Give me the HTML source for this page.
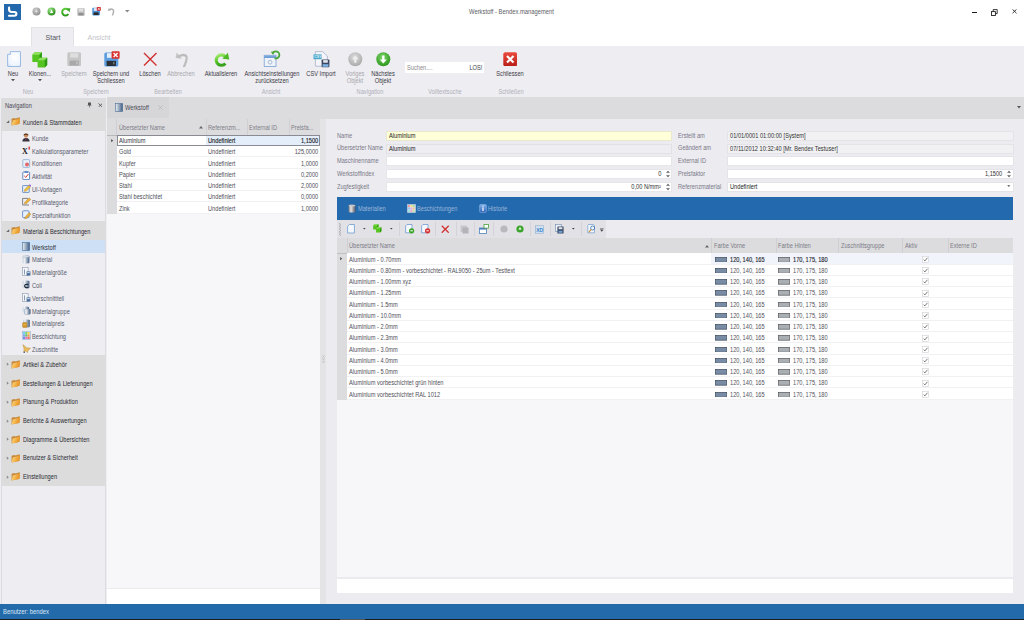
<!DOCTYPE html><html><head><meta charset="utf-8"><style>
*{margin:0;padding:0;box-sizing:border-box}
html,body{width:1024px;height:620px;overflow:hidden;background:#eeedf2}
body{position:relative;font-family:"Liberation Sans",sans-serif}
.a{position:absolute}
.t{position:absolute;white-space:nowrap;line-height:10px;font-family:"Liberation Sans",sans-serif}
</style></head><body>
<div class="a" style="left:0px;top:0px;width:1024px;height:46px;background:#ffffff"></div>
<div class="a" style="left:4px;top:4px;width:17px;height:16px;background:#2368ad"></div>
<svg class="a" style="left:4px;top:4px" width="17" height="16" viewBox="0 0 17 16"><path d="M5.1 3.6 V5.6 Q5.1 8 7.6 8 H10.2 Q12.4 8 12.4 9.8 Q12.4 11.7 10.2 11.7 H5" fill="none" stroke="#fff" stroke-width="2.1" stroke-linecap="round" stroke-linejoin="round"/></svg>
<svg class="a" style="left:31.6px;top:7.4px" width="9" height="9" viewBox="0 0 9 9"><defs><radialGradient id="gg1" cx="0.4" cy="0.35" r="0.7"><stop offset="0" stop-color="#d0d0d0"/><stop offset="1" stop-color="#8d8d8d"/></radialGradient></defs><circle cx="4.5" cy="4.4" r="4" fill="url(#gg1)"/><path d="M4.5 2.6 L4.9 4 L5.9 4.4 L4.9 4.8 L4.5 6.2 L4.1 4.8 L3.1 4.4 L4.1 4Z" fill="#e8e8e8"/></svg>
<svg class="a" style="left:46.6px;top:7.2px" width="9" height="9" viewBox="0 0 9 9"><defs><radialGradient id="gg2" cx="0.35" cy="0.3" r="0.75"><stop offset="0" stop-color="#9ce88a"/><stop offset="1" stop-color="#2a8a1a"/></radialGradient></defs><circle cx="4.5" cy="4.4" r="4" fill="url(#gg2)"/><path d="M4.6 2.6 L6.2 6 H3Z" fill="#fff"/></svg>
<svg class="a" style="left:61.2px;top:7px" width="9.5" height="9.5" viewBox="0 0 9.5 9.5"><defs><linearGradient id="rg" x1="0" y1="0" x2="0" y2="1"><stop offset="0" stop-color="#5ccc3a"/><stop offset="1" stop-color="#2a9a1a"/></linearGradient></defs><path d="M7.4 3.2 A3.4 3.4 0 1 0 7.4 7" fill="none" stroke="url(#rg)" stroke-width="2"/><path d="M5.4 1.6 L9.4 1.2 L8.6 5.2 Z" fill="#3aa52a"/></svg>
<svg class="a" style="left:77px;top:7.5px" width="8" height="8" viewBox="0 0 8 8"><rect x="0.3" y="0.3" width="7.4" height="7.4" rx="0.8" fill="#bdbdbd"/><rect x="1.8" y="0.8" width="4.4" height="2.6" fill="#e2e2e2"/><rect x="1.5" y="5" width="5" height="2.4" fill="#8e8e8e"/></svg>
<svg class="a" style="left:92px;top:7.3px" width="9" height="9" viewBox="0 0 9 9"><rect x="0.3" y="0.8" width="7.6" height="7.6" rx="0.8" fill="#4a8fd6"/><rect x="1.8" y="1.2" width="3.6" height="2.6" fill="#e8eef5"/><rect x="1.6" y="5.4" width="5" height="2.6" fill="#2a2a2a"/><rect x="4.8" y="0" width="4" height="3.8" rx="0.6" fill="#d42b2b"/><path d="M5.8 1 L7.8 2.8 M7.8 1 L5.8 2.8" stroke="#fff" stroke-width="0.7"/></svg>
<svg class="a" style="left:107px;top:7px" width="8" height="9" viewBox="0 0 8 9"><path d="M1.8 1 L1 4 L3.8 3.6" fill="#b0b0b0"/><path d="M2 3 Q4 1.2 6 2.6 Q7.4 4 5.4 8.5" fill="none" stroke="#b0b0b0" stroke-width="1.5"/></svg>
<svg class="a" style="left:125px;top:10px" width="4.5" height="3" viewBox="0 0 4.5 3"><path d="M0 0 H4.5 L2.25 2.6Z" fill="#888"/></svg>
<div class="t" style="left:468.70px;top:7.12px;font-size:6.3px;color:#606066;font-weight:normal;-webkit-text-stroke:0.02px #606066;;transform:scaleX(0.925);transform-origin:0 0">Werkstoff - Bendex.management</div>
<div class="a" style="left:972px;top:11.6px;width:5.2px;height:1.9px;background:#1a1a1a"></div>
<svg class="a" style="left:990.5px;top:8.5px" width="7" height="7" viewBox="0 0 7 7"><rect x="0.5" y="2.6" width="3.9" height="3.9" fill="none" stroke="#222" stroke-width="0.9"/><path d="M2.2 2.6 V0.6 H6.2 V4.6 H4.4" fill="none" stroke="#222" stroke-width="0.9"/></svg>
<svg class="a" style="left:1011.5px;top:9.2px" width="5" height="4.6" viewBox="0 0 5 4.6"><path d="M0.5 0.4 L4.5 4.2 M4.5 0.4 L0.5 4.2" stroke="#222" stroke-width="0.9"/></svg>
<div class="a" style="left:31px;top:26.8px;width:43px;height:19.4px;background:#eeedf2;border:1px solid #e2e2e6;border-bottom:none"></div>
<div class="a" style="left:0px;top:45.6px;width:31px;height:0.8px;background:#e2e2e6"></div>
<div class="a" style="left:74px;top:45.6px;width:950px;height:0.8px;background:#e2e2e6"></div>
<div class="t" style="left:-47.50px;width:200px;text-align:center;top:32.54px;font-size:7.4px;color:#555560;font-weight:normal;-webkit-text-stroke:0.02px #555560;;transform:scaleX(0.95);transform-origin:50% 0">Start</div>
<div class="t" style="left:-1.50px;width:200px;text-align:center;top:32.54px;font-size:7.4px;color:#c4c4c8;font-weight:normal;-webkit-text-stroke:0.02px #c4c4c8;;transform:scaleX(0.95);transform-origin:50% 0">Ansicht</div>
<div class="a" style="left:0px;top:46px;width:1024px;height:50px;background:#eeedf2"></div>
<svg class="a" style="left:7px;top:51px" width="14" height="16" viewBox="0 0 14 16"><defs><linearGradient id="dg" x1="0" y1="0" x2="1" y2="1"><stop offset="0" stop-color="#ffffff"/><stop offset="1" stop-color="#d6e6f8"/></linearGradient></defs><defs><radialGradient id="dg2" cx="0.55" cy="0.4" r="0.75"><stop offset="0" stop-color="#ffffff"/><stop offset="0.7" stop-color="#eef5fd"/><stop offset="1" stop-color="#cfe0f6"/></radialGradient></defs><path d="M3.3 0.6 H13.1 Q13.5 0.6 13.5 1 V15 Q13.5 15.5 13 15.5 H1 Q0.6 15.5 0.6 15 V3.4 H3.3 Z" fill="url(#dg2)" stroke="#9dbbe2" stroke-width="1"/></svg>
<div class="t" style="left:-86.70px;width:200px;text-align:center;top:69.02px;font-size:6.3px;color:#3c3c46;font-weight:normal;-webkit-text-stroke:0.02px #3c3c46;;transform:scaleX(0.9);transform-origin:50% 0">Neu</div>
<svg class="a" style="left:11.3px;top:79px" width="4" height="2.5" viewBox="0 0 4 2.5"><path d="M0 0 H4 L2 2.2Z" fill="#555"/></svg>
<svg class="a" style="left:32px;top:51.5px" width="16" height="16" viewBox="0 0 16 16"><g transform="translate(0.3,0.3)"><path d="M0 2.4 L2.4 0 H9.6 V7.2 L7.2 9.6 H0Z" fill="#56c420"/><path d="M0 2.4 L2.4 0 H9.6 L7.2 2.4Z" fill="#8fe060"/><path d="M7.2 2.4 L9.6 0 V7.2 L7.2 9.6Z" fill="#2c9a14"/></g><g transform="translate(5.6,5.8)"><path d="M0 2.4 L2.4 0 H9.6 V7.2 L7.2 9.6 H0Z" fill="#56c420"/><path d="M0 2.4 L2.4 0 H9.6 L7.2 2.4Z" fill="#8fe060"/><path d="M7.2 2.4 L9.6 0 V7.2 L7.2 9.6Z" fill="#2c9a14"/></g></svg>
<div class="t" style="left:-59.80px;width:200px;text-align:center;top:69.02px;font-size:6.3px;color:#3c3c46;font-weight:normal;-webkit-text-stroke:0.02px #3c3c46;;transform:scaleX(0.9);transform-origin:50% 0">Klonen...</div>
<svg class="a" style="left:37.8px;top:79px" width="4" height="2.5" viewBox="0 0 4 2.5"><path d="M0 0 H4 L2 2.2Z" fill="#555"/></svg>
<svg class="a" style="left:66.5px;top:51.8px" width="14.5" height="14.5" viewBox="0 0 14.5 14.5"><rect x="0.3" y="0.3" width="13.8" height="13.8" rx="1.5" fill="#c6c6c6"/><rect x="3.2" y="1.2" width="8" height="4.4" fill="#dedede"/><rect x="2.6" y="8.6" width="9.2" height="5" fill="#a9a9a9"/><rect x="9.4" y="9.6" width="1" height="2.6" fill="#d0d0d0"/></svg>
<div class="t" style="left:-26.50px;width:200px;text-align:center;top:69.02px;font-size:6.3px;color:#a8a8ae;font-weight:normal;-webkit-text-stroke:0.02px #a8a8ae;;transform:scaleX(0.9);transform-origin:50% 0">Speichern</div>
<svg class="a" style="left:103.8px;top:51.2px" width="16" height="16" viewBox="0 0 16 16"><rect x="0.3" y="1.4" width="14" height="14" rx="1.5" fill="#5c9ee0"/><rect x="3" y="2.2" width="7" height="4.6" fill="#e6edf4"/><rect x="2.6" y="9.8" width="9.4" height="5.2" fill="#2b2f36"/><rect x="9.4" y="10.8" width="0.9" height="2.6" fill="#8aa"/><rect x="7.6" y="0.2" width="8" height="7.6" rx="1" fill="#d9322f"/><path d="M9.6 2 L13.6 6 M13.6 2 L9.6 6" stroke="#fff" stroke-width="1.3"/></svg>
<div class="t" style="left:11.30px;width:200px;text-align:center;top:69.02px;font-size:6.3px;color:#3c3c46;font-weight:normal;-webkit-text-stroke:0.02px #3c3c46;;transform:scaleX(0.9);transform-origin:50% 0">Speichern und</div>
<div class="t" style="left:11.00px;width:200px;text-align:center;top:75.82px;font-size:6.3px;color:#3c3c46;font-weight:normal;-webkit-text-stroke:0.02px #3c3c46;;transform:scaleX(0.9);transform-origin:50% 0">Schliessen</div>
<svg class="a" style="left:143px;top:52px" width="14.5" height="14.5" viewBox="0 0 14.5 14.5"><path d="M1 1 L13.5 13.5 M13.5 1 L1 13.5" stroke="#d22f2f" stroke-width="1.4"/></svg>
<div class="t" style="left:49.50px;width:200px;text-align:center;top:69.02px;font-size:6.3px;color:#3c3c46;font-weight:normal;-webkit-text-stroke:0.02px #3c3c46;;transform:scaleX(0.9);transform-origin:50% 0">Löschen</div>
<svg class="a" style="left:174.5px;top:51.5px" width="13.5" height="15.5" viewBox="0 0 13.5 15.5"><path d="M1.7 0.4 L0.6 6.1 L6.9 6.8 Z" fill="#c4c4c4"/><path d="M3.6 4.4 Q8 2 11 3.8 Q13 5.6 9 14.8" fill="none" stroke="#bcbcbc" stroke-width="2.3" stroke-linecap="round"/></svg>
<div class="t" style="left:81.00px;width:200px;text-align:center;top:69.02px;font-size:6.3px;color:#a8a8ae;font-weight:normal;-webkit-text-stroke:0.02px #a8a8ae;;transform:scaleX(0.9);transform-origin:50% 0">Abbrechen</div>
<svg class="a" style="left:213.5px;top:51.8px" width="16" height="15" viewBox="0 0 16 15"><defs><linearGradient id="ag" x1="0" y1="0" x2="0.3" y2="1"><stop offset="0" stop-color="#a4ec70"/><stop offset="0.5" stop-color="#62cc30"/><stop offset="1" stop-color="#38a41c"/></linearGradient></defs><path d="M11.1 4.4 A5.2 5.2 0 1 0 11.4 11.5" fill="none" stroke="url(#ag)" stroke-width="3.1"/><path d="M13.9 0.8 L15.3 7.6 L8.4 6.8 Z" fill="#4cba24"/></svg>
<div class="t" style="left:121.30px;width:200px;text-align:center;top:69.02px;font-size:6.3px;color:#3c3c46;font-weight:normal;-webkit-text-stroke:0.02px #3c3c46;;transform:scaleX(0.9);transform-origin:50% 0">Aktualisieren</div>
<svg class="a" style="left:263px;top:50px" width="18" height="18" viewBox="0 0 18 18"><defs><linearGradient id="wt" x1="0" y1="0" x2="0" y2="1"><stop offset="0" stop-color="#8db4e2"/><stop offset="1" stop-color="#5b8fd0"/></linearGradient></defs><rect x="1.2" y="5.3" width="11.8" height="11.2" fill="#eef3fa" stroke="#7aa0d4" stroke-width="0.8"/><rect x="1.2" y="5.3" width="11.8" height="2.6" fill="url(#wt)"/><circle cx="7.1" cy="12.2" r="1.9" fill="none" stroke="#a8bcd6" stroke-width="1"/><path d="M9.6 3.6 A3.5 3.5 0 1 1 11.6 8.2" fill="none" stroke="#49a83a" stroke-width="1.9"/><path d="M7.8 1.8 L11.4 1.6 L10.2 5Z" fill="#49a83a"/></svg>
<div class="t" style="left:171.80px;width:200px;text-align:center;top:68.82px;font-size:6.3px;color:#3c3c46;font-weight:normal;-webkit-text-stroke:0.02px #3c3c46;;transform:scaleX(0.9);transform-origin:50% 0">Ansichtseinstellungen</div>
<div class="t" style="left:172.30px;width:200px;text-align:center;top:75.82px;font-size:6.3px;color:#3c3c46;font-weight:normal;-webkit-text-stroke:0.02px #3c3c46;;transform:scaleX(0.9);transform-origin:50% 0">zurücksetzen</div>
<svg class="a" style="left:312.5px;top:50.5px" width="17" height="17" viewBox="0 0 17 17"><path d="M2.4 0.6 H9.6 L14.4 5 V15.2 H2.4Z" fill="#f3f5fa" stroke="#a0a8c0" stroke-width="0.7"/><rect x="0.5" y="3.4" width="8.2" height="4.8" fill="#4aa6c9"/><text x="1.2" y="7.4" font-family="Liberation Sans" font-size="3.6" font-weight="bold" fill="#dff2fa">CSV</text><rect x="8.6" y="8.5" width="7.8" height="7.8" rx="0.8" fill="#3b4660"/><rect x="10.2" y="9.1" width="4.6" height="2.6" fill="#e4e8ee"/><rect x="9.6" y="13.2" width="5.8" height="2.6" fill="#7fb2e2"/></svg>
<div class="t" style="left:220.70px;width:200px;text-align:center;top:68.82px;font-size:6.3px;color:#3c3c46;font-weight:normal;-webkit-text-stroke:0.02px #3c3c46;;transform:scaleX(0.9);transform-origin:50% 0">CSV Import</div>
<svg class="a" style="left:347.5px;top:51.8px" width="15" height="15" viewBox="0 0 15 15"><defs><radialGradient id="vg" cx="0.45" cy="0.35" r="0.7"><stop offset="0" stop-color="#dcdcdc"/><stop offset="1" stop-color="#a6a6a6"/></radialGradient></defs><circle cx="7.3" cy="7.3" r="7" fill="url(#vg)"/><path d="M7.3 3.4 L10.6 7.2 H8.4 V10.8 H6.2 V7.2 H4Z" fill="#eeeeee"/></svg>
<div class="t" style="left:254.60px;width:200px;text-align:center;top:68.82px;font-size:6.3px;color:#a8a8ae;font-weight:normal;-webkit-text-stroke:0.02px #a8a8ae;;transform:scaleX(0.9);transform-origin:50% 0">Voriges</div>
<div class="t" style="left:254.60px;width:200px;text-align:center;top:75.72px;font-size:6.3px;color:#a8a8ae;font-weight:normal;-webkit-text-stroke:0.02px #a8a8ae;;transform:scaleX(0.9);transform-origin:50% 0">Objekt</div>
<svg class="a" style="left:375.8px;top:51.8px" width="15" height="15" viewBox="0 0 15 15"><defs><radialGradient id="ng" cx="0.45" cy="0.35" r="0.7"><stop offset="0" stop-color="#7fd96a"/><stop offset="1" stop-color="#259016"/></radialGradient></defs><circle cx="7.3" cy="7.3" r="7" fill="url(#ng)"/><path d="M7.3 11.4 L10.8 7.4 H8.5 V3.6 H6.1 V7.4 H3.8Z" fill="#ffffff"/></svg>
<div class="t" style="left:282.50px;width:200px;text-align:center;top:68.82px;font-size:6.3px;color:#3c3c46;font-weight:normal;-webkit-text-stroke:0.02px #3c3c46;;transform:scaleX(0.9);transform-origin:50% 0">Nächstes</div>
<div class="t" style="left:282.80px;width:200px;text-align:center;top:75.72px;font-size:6.3px;color:#3c3c46;font-weight:normal;-webkit-text-stroke:0.02px #3c3c46;;transform:scaleX(0.9);transform-origin:50% 0">Objekt</div>
<div class="a" style="left:405px;top:62px;width:79px;height:10.7px;background:#fff"></div>
<div class="t" style="left:407.20px;top:63.02px;font-size:6.3px;color:#8a8a8a;font-weight:normal;-webkit-text-stroke:0.02px #8a8a8a;;transform:scaleX(0.9);transform-origin:0 0">Suchen....</div>
<div class="t" style="right:541.40px;top:63.02px;font-size:6.3px;color:#3c3c46;font-weight:normal;-webkit-text-stroke:0.02px #3c3c46;;transform:scaleX(0.9);transform-origin:100% 0">LOS!</div>
<svg class="a" style="left:502.5px;top:51.8px" width="14.5" height="14.5" viewBox="0 0 14.5 14.5"><defs><linearGradient id="sg" x1="0" y1="0" x2="0" y2="1"><stop offset="0" stop-color="#ec4b3e"/><stop offset="1" stop-color="#b81e18"/></linearGradient></defs><rect x="0.3" y="0.3" width="13.9" height="13.9" rx="2" fill="url(#sg)"/><path d="M4 4 L10.5 10.5 M10.5 4 L4 10.5" stroke="#fff" stroke-width="2.2"/></svg>
<div class="t" style="left:410.00px;width:200px;text-align:center;top:68.62px;font-size:6.3px;color:#3c3c46;font-weight:normal;-webkit-text-stroke:0.02px #3c3c46;;transform:scaleX(0.9);transform-origin:50% 0">Schliessen</div>
<div class="t" style="left:-71.70px;width:200px;text-align:center;top:87.42px;font-size:6.3px;color:#b0b0b8;font-weight:normal;-webkit-text-stroke:0.02px #b0b0b8;;transform:scaleX(0.9);transform-origin:50% 0">Neu</div>
<div class="t" style="left:-4.50px;width:200px;text-align:center;top:87.42px;font-size:6.3px;color:#b0b0b8;font-weight:normal;-webkit-text-stroke:0.02px #b0b0b8;;transform:scaleX(0.9);transform-origin:50% 0">Speichern</div>
<div class="t" style="left:67.50px;width:200px;text-align:center;top:87.42px;font-size:6.3px;color:#b0b0b8;font-weight:normal;-webkit-text-stroke:0.02px #b0b0b8;;transform:scaleX(0.9);transform-origin:50% 0">Bearbeiten</div>
<div class="t" style="left:170.60px;width:200px;text-align:center;top:87.42px;font-size:6.3px;color:#b0b0b8;font-weight:normal;-webkit-text-stroke:0.02px #b0b0b8;;transform:scaleX(0.9);transform-origin:50% 0">Ansicht</div>
<div class="t" style="left:270.30px;width:200px;text-align:center;top:87.42px;font-size:6.3px;color:#b0b0b8;font-weight:normal;-webkit-text-stroke:0.02px #b0b0b8;;transform:scaleX(0.9);transform-origin:50% 0">Navigation</div>
<div class="t" style="left:345.30px;width:200px;text-align:center;top:87.42px;font-size:6.3px;color:#b0b0b8;font-weight:normal;-webkit-text-stroke:0.02px #b0b0b8;;transform:scaleX(0.9);transform-origin:50% 0">Volltextsuche</div>
<div class="t" style="left:410.50px;width:200px;text-align:center;top:87.42px;font-size:6.3px;color:#b0b0b8;font-weight:normal;-webkit-text-stroke:0.02px #b0b0b8;;transform:scaleX(0.9);transform-origin:50% 0">Schließen</div>
<div class="a" style="left:1px;top:98px;width:104.5px;height:506px;background:#eeedf2;border-left:1px solid #dcdce0;border-right:1px solid #dcdce0"></div>
<div class="a" style="left:1px;top:98px;width:104.5px;height:14.3px;background:#dcdcdf"></div>
<div class="t" style="left:5.00px;top:100.92px;font-size:6.3px;color:#4a4a55;font-weight:normal;-webkit-text-stroke:0.02px #4a4a55;;transform:scaleX(0.9);transform-origin:0 0">Navigation</div>
<svg class="a" style="left:86.5px;top:102px" width="5" height="6" viewBox="0 0 5 6"><path d="M1 0.5 H4 V3 H4.6 V3.6 H2.8 V5.6 H2.2 V3.6 H0.4 V3 H1Z" fill="#555"/></svg>
<svg class="a" style="left:97.6px;top:102.7px" width="4.8" height="4.6" viewBox="0 0 4.8 4.6"><path d="M0.4 0.4 L4.4 4.2 M4.4 0.4 L0.4 4.2" stroke="#5a5a5e" stroke-width="0.9"/></svg>
<div class="a" style="left:1.5px;top:112.3px;width:103.5px;height:18.9px;background:#dcdcdd"></div>
<svg class="a" style="left:5.6px;top:120.3px" width="4" height="4" viewBox="0 0 4 4"><path d="M3.2 0.2 V3 H0.2Z" fill="#666"/></svg>
<svg class="a" style="left:11.3px;top:117.4px" width="9.5" height="9" viewBox="0 0 9.5 9"><defs><linearGradient id="fg" x1="0" y1="0" x2="1" y2="0.3"><stop offset="0" stop-color="#ffe08a"/><stop offset="1" stop-color="#e8901c"/></linearGradient></defs><path d="M0.5 1.8 L3.4 0.9 L4.2 1.5 L8.8 0.3 L8.4 6.8 L0.6 8.4Z" fill="#c8893a"/><path d="M1.8 3.4 L9.1 1.5 L8.2 6.9 L0.7 8.4 Z" fill="url(#fg)"/></svg>
<div class="t" style="left:22.60px;top:118.02px;font-size:6.3px;color:#2a2a32;font-weight:normal;-webkit-text-stroke:0.02px #2a2a32;;transform:scaleX(0.9);transform-origin:0 0">Kunden &amp; Stammdaten</div>
<div class="a" style="left:1.5px;top:221.10000000000002px;width:103.5px;height:18.9px;background:#dcdcdd"></div>
<svg class="a" style="left:5.6px;top:229.10000000000002px" width="4" height="4" viewBox="0 0 4 4"><path d="M3.2 0.2 V3 H0.2Z" fill="#666"/></svg>
<svg class="a" style="left:11.3px;top:226.20000000000002px" width="9.5" height="9" viewBox="0 0 9.5 9"><defs><linearGradient id="fg" x1="0" y1="0" x2="1" y2="0.3"><stop offset="0" stop-color="#ffe08a"/><stop offset="1" stop-color="#e8901c"/></linearGradient></defs><path d="M0.5 1.8 L3.4 0.9 L4.2 1.5 L8.8 0.3 L8.4 6.8 L0.6 8.4Z" fill="#c8893a"/><path d="M1.8 3.4 L9.1 1.5 L8.2 6.9 L0.7 8.4 Z" fill="url(#fg)"/></svg>
<div class="t" style="left:22.60px;top:226.82px;font-size:6.3px;color:#2a2a32;font-weight:normal;-webkit-text-stroke:0.02px #2a2a32;;transform:scaleX(0.9);transform-origin:0 0">Material &amp; Beschichtungen</div>
<div class="a" style="left:1.5px;top:239.8px;width:103.5px;height:12.8px;background:#cde0f5"></div>
<div class="a" style="left:1.5px;top:355.0px;width:103.5px;height:18.9px;background:#dcdcdd"></div>
<svg class="a" style="left:5.8px;top:362.4px" width="4" height="5" viewBox="0 0 4 5"><path d="M0.8 0.6 L2.8 2.2 L0.8 3.8Z" fill="#888"/></svg>
<svg class="a" style="left:11.3px;top:360.09999999999997px" width="9.5" height="9" viewBox="0 0 9.5 9"><defs><linearGradient id="fg" x1="0" y1="0" x2="1" y2="0.3"><stop offset="0" stop-color="#ffe08a"/><stop offset="1" stop-color="#e8901c"/></linearGradient></defs><path d="M0.5 1.8 L3.4 0.9 L4.2 1.5 L8.8 0.3 L8.4 6.8 L0.6 8.4Z" fill="#c8893a"/><path d="M1.8 3.4 L9.1 1.5 L8.2 6.9 L0.7 8.4 Z" fill="url(#fg)"/></svg>
<div class="t" style="left:22.60px;top:359.92px;font-size:6.3px;color:#2a2a32;font-weight:normal;-webkit-text-stroke:0.02px #2a2a32;;transform:scaleX(0.9);transform-origin:0 0">Artikel &amp; Zubehör</div>
<div class="a" style="left:1.5px;top:373.7px;width:103.5px;height:18.9px;background:#dcdcdd"></div>
<svg class="a" style="left:5.8px;top:381.09999999999997px" width="4" height="5" viewBox="0 0 4 5"><path d="M0.8 0.6 L2.8 2.2 L0.8 3.8Z" fill="#888"/></svg>
<svg class="a" style="left:11.3px;top:378.79999999999995px" width="9.5" height="9" viewBox="0 0 9.5 9"><defs><linearGradient id="fg" x1="0" y1="0" x2="1" y2="0.3"><stop offset="0" stop-color="#ffe08a"/><stop offset="1" stop-color="#e8901c"/></linearGradient></defs><path d="M0.5 1.8 L3.4 0.9 L4.2 1.5 L8.8 0.3 L8.4 6.8 L0.6 8.4Z" fill="#c8893a"/><path d="M1.8 3.4 L9.1 1.5 L8.2 6.9 L0.7 8.4 Z" fill="url(#fg)"/></svg>
<div class="t" style="left:22.60px;top:378.62px;font-size:6.3px;color:#2a2a32;font-weight:normal;-webkit-text-stroke:0.02px #2a2a32;;transform:scaleX(0.9);transform-origin:0 0">Bestellungen &amp; Lieferungen</div>
<div class="a" style="left:1.5px;top:392.4px;width:103.5px;height:18.9px;background:#dcdcdd"></div>
<svg class="a" style="left:5.8px;top:399.79999999999995px" width="4" height="5" viewBox="0 0 4 5"><path d="M0.8 0.6 L2.8 2.2 L0.8 3.8Z" fill="#888"/></svg>
<svg class="a" style="left:11.3px;top:397.49999999999994px" width="9.5" height="9" viewBox="0 0 9.5 9"><defs><linearGradient id="fg" x1="0" y1="0" x2="1" y2="0.3"><stop offset="0" stop-color="#ffe08a"/><stop offset="1" stop-color="#e8901c"/></linearGradient></defs><path d="M0.5 1.8 L3.4 0.9 L4.2 1.5 L8.8 0.3 L8.4 6.8 L0.6 8.4Z" fill="#c8893a"/><path d="M1.8 3.4 L9.1 1.5 L8.2 6.9 L0.7 8.4 Z" fill="url(#fg)"/></svg>
<div class="t" style="left:22.60px;top:397.32px;font-size:6.3px;color:#2a2a32;font-weight:normal;-webkit-text-stroke:0.02px #2a2a32;;transform:scaleX(0.9);transform-origin:0 0">Planung &amp; Produktion</div>
<div class="a" style="left:1.5px;top:411.09999999999997px;width:103.5px;height:18.9px;background:#dcdcdd"></div>
<svg class="a" style="left:5.8px;top:418.49999999999994px" width="4" height="5" viewBox="0 0 4 5"><path d="M0.8 0.6 L2.8 2.2 L0.8 3.8Z" fill="#888"/></svg>
<svg class="a" style="left:11.3px;top:416.19999999999993px" width="9.5" height="9" viewBox="0 0 9.5 9"><defs><linearGradient id="fg" x1="0" y1="0" x2="1" y2="0.3"><stop offset="0" stop-color="#ffe08a"/><stop offset="1" stop-color="#e8901c"/></linearGradient></defs><path d="M0.5 1.8 L3.4 0.9 L4.2 1.5 L8.8 0.3 L8.4 6.8 L0.6 8.4Z" fill="#c8893a"/><path d="M1.8 3.4 L9.1 1.5 L8.2 6.9 L0.7 8.4 Z" fill="url(#fg)"/></svg>
<div class="t" style="left:22.60px;top:416.02px;font-size:6.3px;color:#2a2a32;font-weight:normal;-webkit-text-stroke:0.02px #2a2a32;;transform:scaleX(0.9);transform-origin:0 0">Berichte &amp; Auswertungen</div>
<div class="a" style="left:1.5px;top:429.79999999999995px;width:103.5px;height:18.9px;background:#dcdcdd"></div>
<svg class="a" style="left:5.8px;top:437.19999999999993px" width="4" height="5" viewBox="0 0 4 5"><path d="M0.8 0.6 L2.8 2.2 L0.8 3.8Z" fill="#888"/></svg>
<svg class="a" style="left:11.3px;top:434.8999999999999px" width="9.5" height="9" viewBox="0 0 9.5 9"><defs><linearGradient id="fg" x1="0" y1="0" x2="1" y2="0.3"><stop offset="0" stop-color="#ffe08a"/><stop offset="1" stop-color="#e8901c"/></linearGradient></defs><path d="M0.5 1.8 L3.4 0.9 L4.2 1.5 L8.8 0.3 L8.4 6.8 L0.6 8.4Z" fill="#c8893a"/><path d="M1.8 3.4 L9.1 1.5 L8.2 6.9 L0.7 8.4 Z" fill="url(#fg)"/></svg>
<div class="t" style="left:22.60px;top:434.72px;font-size:6.3px;color:#2a2a32;font-weight:normal;-webkit-text-stroke:0.02px #2a2a32;;transform:scaleX(0.9);transform-origin:0 0">Diagramme &amp; Übersichten</div>
<div class="a" style="left:1.5px;top:448.49999999999994px;width:103.5px;height:18.9px;background:#dcdcdd"></div>
<svg class="a" style="left:5.8px;top:455.8999999999999px" width="4" height="5" viewBox="0 0 4 5"><path d="M0.8 0.6 L2.8 2.2 L0.8 3.8Z" fill="#888"/></svg>
<svg class="a" style="left:11.3px;top:453.5999999999999px" width="9.5" height="9" viewBox="0 0 9.5 9"><defs><linearGradient id="fg" x1="0" y1="0" x2="1" y2="0.3"><stop offset="0" stop-color="#ffe08a"/><stop offset="1" stop-color="#e8901c"/></linearGradient></defs><path d="M0.5 1.8 L3.4 0.9 L4.2 1.5 L8.8 0.3 L8.4 6.8 L0.6 8.4Z" fill="#c8893a"/><path d="M1.8 3.4 L9.1 1.5 L8.2 6.9 L0.7 8.4 Z" fill="url(#fg)"/></svg>
<div class="t" style="left:22.60px;top:453.42px;font-size:6.3px;color:#2a2a32;font-weight:normal;-webkit-text-stroke:0.02px #2a2a32;;transform:scaleX(0.9);transform-origin:0 0">Benutzer &amp; Sicherheit</div>
<div class="a" style="left:1.5px;top:467.19999999999993px;width:103.5px;height:18.9px;background:#dcdcdd"></div>
<svg class="a" style="left:5.8px;top:474.5999999999999px" width="4" height="5" viewBox="0 0 4 5"><path d="M0.8 0.6 L2.8 2.2 L0.8 3.8Z" fill="#888"/></svg>
<svg class="a" style="left:11.3px;top:472.2999999999999px" width="9.5" height="9" viewBox="0 0 9.5 9"><defs><linearGradient id="fg" x1="0" y1="0" x2="1" y2="0.3"><stop offset="0" stop-color="#ffe08a"/><stop offset="1" stop-color="#e8901c"/></linearGradient></defs><path d="M0.5 1.8 L3.4 0.9 L4.2 1.5 L8.8 0.3 L8.4 6.8 L0.6 8.4Z" fill="#c8893a"/><path d="M1.8 3.4 L9.1 1.5 L8.2 6.9 L0.7 8.4 Z" fill="url(#fg)"/></svg>
<div class="t" style="left:22.60px;top:472.12px;font-size:6.3px;color:#2a2a32;font-weight:normal;-webkit-text-stroke:0.02px #2a2a32;;transform:scaleX(0.9);transform-origin:0 0">Einstellungen</div>
<svg class="a" style="left:22px;top:133.0px" width="8" height="9" viewBox="0 0 8 9"><circle cx="4" cy="2.6" r="2.1" fill="#c98c5a"/><path d="M1.6 1.6 Q4 -0.6 6.4 1.6 L6.2 2.4 Q4 1.2 1.8 2.4Z" fill="#5a3520"/><path d="M0.4 8.6 Q0.4 5 4 5 Q7.6 5 7.6 8.6Z" fill="#2e3440"/><path d="M3.6 5.2 H4.4 L4.2 8 H3.8Z" fill="#c03030"/></svg>
<div class="t" style="left:32.20px;top:133.72px;font-size:6.3px;color:#585c6e;font-weight:normal;-webkit-text-stroke:0.02px #585c6e;;transform:scaleX(0.9);transform-origin:0 0">Kunde</div>
<svg class="a" style="left:22px;top:145.8px" width="9" height="9" viewBox="0 0 9 9"><text x="0" y="7.6" font-family="Liberation Serif" font-weight="bold" font-size="8" fill="#222">X</text><rect x="6.6" y="0.6" width="1.2" height="3" fill="#d02020"/></svg>
<div class="t" style="left:32.20px;top:146.52px;font-size:6.3px;color:#585c6e;font-weight:normal;-webkit-text-stroke:0.02px #585c6e;;transform:scaleX(0.9);transform-origin:0 0">Kalkulationsparameter</div>
<svg class="a" style="left:22px;top:158.6px" width="9" height="9" viewBox="0 0 9 9"><rect x="0.8" y="0.6" width="6.8" height="7.8" rx="0.8" fill="#e8f0f8" stroke="#7da2cc" stroke-width="0.7"/><circle cx="5" cy="5.6" r="2" fill="#e06868"/></svg>
<div class="t" style="left:32.20px;top:159.32px;font-size:6.3px;color:#585c6e;font-weight:normal;-webkit-text-stroke:0.02px #585c6e;;transform:scaleX(0.9);transform-origin:0 0">Konditionen</div>
<svg class="a" style="left:22px;top:171.4px" width="9" height="9" viewBox="0 0 9 9"><rect x="0.8" y="1" width="6.8" height="7.6" rx="0.6" fill="#fff" stroke="#4d7fc0" stroke-width="0.9"/><rect x="2.6" y="0.2" width="3.2" height="1.6" fill="#4d7fc0"/><path d="M2.2 4.8 L3.8 6.4 L6.4 3" fill="none" stroke="#d02a2a" stroke-width="0.9"/></svg>
<div class="t" style="left:32.20px;top:172.12px;font-size:6.3px;color:#585c6e;font-weight:normal;-webkit-text-stroke:0.02px #585c6e;;transform:scaleX(0.9);transform-origin:0 0">Aktivität</div>
<svg class="a" style="left:22px;top:184.20000000000002px" width="9" height="9" viewBox="0 0 9 9"><rect x="0.6" y="1.6" width="6.6" height="7" rx="0.6" fill="#e8f0fb" stroke="#4d7fc0" stroke-width="0.8"/><path d="M2.2 7.4 L2.6 5.6 L6.8 1.2 L8.6 2.8 L4.2 7.2Z" fill="#f0c040" stroke="#8a6a20" stroke-width="0.3"/><path d="M6.8 1.2 L8 0.2 L9 1.6 L8.6 2.8Z" fill="#8a5ad0"/></svg>
<div class="t" style="left:32.20px;top:184.92px;font-size:6.3px;color:#585c6e;font-weight:normal;-webkit-text-stroke:0.02px #585c6e;;transform:scaleX(0.9);transform-origin:0 0">UI-Vorlagen</div>
<svg class="a" style="left:22px;top:197.0px" width="9" height="9" viewBox="0 0 9 9"><path d="M0.6 1.4 H6 M0.6 1.4 V8 H7" fill="none" stroke="#666" stroke-width="0.8"/><path d="M2.4 7 L2.8 5.2 L7 0.8 L8.8 2.4 L4.4 6.8Z" fill="#eab040" stroke="#8a6a20" stroke-width="0.3"/></svg>
<div class="t" style="left:32.20px;top:197.72px;font-size:6.3px;color:#585c6e;font-weight:normal;-webkit-text-stroke:0.02px #585c6e;;transform:scaleX(0.9);transform-origin:0 0">Profilkategorie</div>
<svg class="a" style="left:22px;top:209.8px" width="9" height="9" viewBox="0 0 9 9"><rect x="0.6" y="0.8" width="6.4" height="6.8" rx="0.8" fill="#e8f0fb" stroke="#4d7fc0" stroke-width="0.8"/><path d="M2.6 8.8 L3 7 L7.2 2.6 L9 4.2 L4.6 8.6Z" fill="#eab040" stroke="#8a6a20" stroke-width="0.3"/></svg>
<div class="t" style="left:32.20px;top:210.52px;font-size:6.3px;color:#585c6e;font-weight:normal;-webkit-text-stroke:0.02px #585c6e;;transform:scaleX(0.9);transform-origin:0 0">Spezialfunktion</div>
<svg class="a" style="left:22px;top:241.8px" width="8" height="9" viewBox="0 0 8 9"><defs><linearGradient id="wg" x1="0" y1="0" x2="1" y2="0"><stop offset="0" stop-color="#f0f4f8"/><stop offset="1" stop-color="#3e5f86"/></linearGradient></defs><rect x="0.4" y="0.5" width="7.2" height="8" fill="url(#wg)" stroke="#4a6b90" stroke-width="0.6"/></svg>
<div class="t" style="left:32.20px;top:242.52px;font-size:6.3px;color:#33333d;font-weight:normal;-webkit-text-stroke:0.02px #33333d;;transform:scaleX(0.9);transform-origin:0 0">Werkstoff</div>
<svg class="a" style="left:22px;top:254.6px" width="8" height="9" viewBox="0 0 8 9"><defs><linearGradient id="mg" x1="0" y1="0" x2="1" y2="0"><stop offset="0" stop-color="#c6d0dc"/><stop offset="0.3" stop-color="#eef2f6"/><stop offset="1" stop-color="#3e5a7e"/></linearGradient></defs><path d="M0.6 1.6 Q0.6 0.6 4 0.6 Q7.4 0.6 7.4 1.6 V7.4 Q7.4 8.4 4 8.4 Q0.6 8.4 0.6 7.4Z" fill="url(#mg)"/><ellipse cx="4" cy="1.6" rx="3.3" ry="0.9" fill="#dde4ec" stroke="#8aa0b8" stroke-width="0.3"/></svg>
<div class="t" style="left:32.20px;top:255.32px;font-size:6.3px;color:#585c6e;font-weight:normal;-webkit-text-stroke:0.02px #585c6e;;transform:scaleX(0.9);transform-origin:0 0">Material</div>
<svg class="a" style="left:22px;top:267.40000000000003px" width="9" height="9" viewBox="0 0 9 9"><rect x="0.5" y="0.6" width="5.6" height="7.8" fill="#f4f6f9" stroke="#8a9ab0" stroke-width="0.6"/><rect x="2" y="2.4" width="1" height="5" fill="#8a9ab0"/><rect x="4.6" y="4.4" width="3.8" height="4.2" fill="#4a6c98"/><rect x="5.2" y="5" width="2.6" height="1.2" fill="#bcd0e8"/></svg>
<div class="t" style="left:32.20px;top:268.12px;font-size:6.3px;color:#585c6e;font-weight:normal;-webkit-text-stroke:0.02px #585c6e;;transform:scaleX(0.9);transform-origin:0 0">Materialgröße</div>
<svg class="a" style="left:22px;top:280.20000000000005px" width="8" height="9" viewBox="0 0 8 9"><defs><linearGradient id="cg" x1="0" y1="0" x2="1" y2="0"><stop offset="0" stop-color="#c6d0dc"/><stop offset="0.3" stop-color="#eef2f6"/><stop offset="1" stop-color="#3e5a7e"/></linearGradient></defs><path d="M0.6 1.6 Q0.6 0.6 4 0.6 Q7.4 0.6 7.4 1.6 V7.4 Q7.4 8.4 4 8.4 Q0.6 8.4 0.6 7.4Z" fill="url(#cg)"/><path d="M6.4 4.6 Q2.6 3.6 2.6 6 Q2.6 8 6.4 7.4" fill="none" stroke="#1e2a3a" stroke-width="1.2"/></svg>
<div class="t" style="left:32.20px;top:280.92px;font-size:6.3px;color:#585c6e;font-weight:normal;-webkit-text-stroke:0.02px #585c6e;;transform:scaleX(0.9);transform-origin:0 0">Coil</div>
<svg class="a" style="left:22px;top:293.00000000000006px" width="9" height="9" viewBox="0 0 9 9"><rect x="0.5" y="0.6" width="5.6" height="7.8" fill="#f4f6f9" stroke="#8a9ab0" stroke-width="0.6"/><rect x="2" y="2.4" width="1" height="5" fill="#8a9ab0"/><rect x="4.6" y="4.4" width="3.8" height="4.2" fill="#4a6c98"/><rect x="5.2" y="5" width="2.6" height="1.2" fill="#bcd0e8"/></svg>
<div class="t" style="left:32.20px;top:293.72px;font-size:6.3px;color:#585c6e;font-weight:normal;-webkit-text-stroke:0.02px #585c6e;;transform:scaleX(0.9);transform-origin:0 0">Verschnittteil</div>
<svg class="a" style="left:22px;top:305.80000000000007px" width="9" height="9" viewBox="0 0 9 9"><defs><linearGradient id="gr" x1="0" y1="0" x2="1" y2="0"><stop offset="0" stop-color="#c6d0dc"/><stop offset="0.3" stop-color="#eef2f6"/><stop offset="1" stop-color="#3e5a7e"/></linearGradient></defs><path d="M0.6 1.4 Q0.6 0.5 3.8 0.5 Q7 0.5 7 1.4 V5.6 Q7 6.4 3.8 6.4 Q0.6 6.4 0.6 5.6Z" fill="url(#gr)"/><path d="M2.4 3.6 Q2.4 2.8 5.4 2.8 Q8.4 2.8 8.4 3.6 V7.8 Q8.4 8.6 5.4 8.6 Q2.4 8.6 2.4 7.8Z" fill="url(#gr)" stroke="#5a7090" stroke-width="0.3"/></svg>
<div class="t" style="left:32.20px;top:306.52px;font-size:6.3px;color:#585c6e;font-weight:normal;-webkit-text-stroke:0.02px #585c6e;;transform:scaleX(0.9);transform-origin:0 0">Materialgruppe</div>
<svg class="a" style="left:22px;top:318.6px" width="9" height="9" viewBox="0 0 9 9"><defs><linearGradient id="pg" x1="0" y1="0" x2="1" y2="0"><stop offset="0" stop-color="#c6d0dc"/><stop offset="0.3" stop-color="#eef2f6"/><stop offset="1" stop-color="#3e5a7e"/></linearGradient></defs><path d="M1 1.6 Q1 0.6 4.4 0.6 Q7.8 0.6 7.8 1.6 V7.4 Q7.8 8.4 4.4 8.4 Q1 8.4 1 7.4Z" fill="url(#pg)"/><rect x="0.6" y="3.6" width="4.4" height="5" rx="1" fill="#d8982a" stroke="#9a6a18" stroke-width="0.4"/><rect x="1.2" y="5.4" width="3.2" height="0.5" fill="#f6d070"/></svg>
<div class="t" style="left:32.20px;top:319.32px;font-size:6.3px;color:#585c6e;font-weight:normal;-webkit-text-stroke:0.02px #585c6e;;transform:scaleX(0.9);transform-origin:0 0">Materialpreis</div>
<svg class="a" style="left:22px;top:331.40000000000003px" width="9" height="9" viewBox="0 0 9 9"><rect x="0.4" y="0.4" width="8.2" height="8.2" fill="#dfe8f6" stroke="#9ab0d0" stroke-width="0.6"/><rect x="1.0" y="1.0" width="2.1" height="2.2" fill="#70d4f0"/><rect x="1.0" y="3.4" width="2.1" height="2.2" fill="#80a8f0"/><rect x="1.0" y="5.8" width="2.1" height="2.2" fill="#7090e0"/><rect x="3.3" y="1.0" width="2.1" height="2.2" fill="#80d070"/><rect x="3.3" y="3.4" width="2.1" height="2.2" fill="#60c060"/><rect x="3.3" y="5.8" width="2.1" height="2.2" fill="#f070c0"/><rect x="5.6" y="1.0" width="2.1" height="2.2" fill="#f0dc50"/><rect x="5.6" y="3.4" width="2.1" height="2.2" fill="#f0a050"/><rect x="5.6" y="5.8" width="2.1" height="2.2" fill="#f07060"/></svg>
<div class="t" style="left:32.20px;top:332.12px;font-size:6.3px;color:#585c6e;font-weight:normal;-webkit-text-stroke:0.02px #585c6e;;transform:scaleX(0.9);transform-origin:0 0">Beschichtung</div>
<svg class="a" style="left:22px;top:344.20000000000005px" width="9" height="9" viewBox="0 0 9 9"><path d="M0.8 0.6 L4.8 3.8 L8.6 4.2 L6 6.4 L5.6 8.6 L3.6 7 L1.8 8 L2 4.4Z" fill="#e8be60" stroke="#b08030" stroke-width="0.4"/><circle cx="2.2" cy="8.2" r="0.7" fill="#2a3a6a"/></svg>
<div class="t" style="left:32.20px;top:344.92px;font-size:6.3px;color:#585c6e;font-weight:normal;-webkit-text-stroke:0.02px #585c6e;;transform:scaleX(0.9);transform-origin:0 0">Zuschnitte</div>
<div class="a" style="left:107px;top:97px;width:917px;height:22px;background:#dcdcdf"></div>
<div class="a" style="left:107px;top:97px;width:62px;height:21px;background:#d6d6d9"></div>
<svg class="a" style="left:115px;top:103.4px" width="8" height="9" viewBox="0 0 8 9"><defs><linearGradient id="wg" x1="0" y1="0" x2="1" y2="0"><stop offset="0" stop-color="#f0f4f8"/><stop offset="1" stop-color="#3e5f86"/></linearGradient></defs><rect x="0.4" y="0.5" width="7.2" height="8" fill="url(#wg)" stroke="#4a6b90" stroke-width="0.6"/></svg>
<div class="t" style="left:125.00px;top:102.92px;font-size:6.3px;color:#4a4a55;font-weight:normal;-webkit-text-stroke:0.02px #4a4a55;;transform:scaleX(0.9);transform-origin:0 0">Werkstoff</div>
<svg class="a" style="left:157.5px;top:104.5px" width="5" height="5" viewBox="0 0 5 5"><path d="M0.5 0.5 L4.5 4.5 M4.5 0.5 L0.5 4.5" stroke="#b8b8bc" stroke-width="0.8"/></svg>
<svg class="a" style="left:1016.5px;top:106px" width="4" height="3" viewBox="0 0 4 3"><path d="M0 0 H4 L2 2.4Z" fill="#555"/></svg>
<div class="a" style="left:107px;top:119px;width:213px;height:485px;background:#f7f7f9"></div>
<div class="a" style="left:107px;top:589px;width:213px;height:15px;background:#ffffff"></div>
<div class="a" style="left:107px;top:588px;width:213px;height:1px;background:#ebebef"></div>
<div class="a" style="left:107px;top:119.4px;width:212.5px;height:15.4px;background:#dcdcde"></div>
<div class="a" style="left:107px;top:134.8px;width:10px;height:78.8px;background:#dcdcde"></div>
<div class="a" style="left:116.2px;top:119.4px;width:0.7px;height:15.4px;background:#d0d0d4"></div>
<div class="a" style="left:206.2px;top:119.4px;width:0.7px;height:15.4px;background:#d0d0d4"></div>
<div class="a" style="left:247.2px;top:119.4px;width:0.7px;height:15.4px;background:#d0d0d4"></div>
<div class="a" style="left:289px;top:119.4px;width:0.7px;height:15.4px;background:#d0d0d4"></div>
<div class="a" style="left:107px;top:134.5px;width:212.5px;height:0.7px;background:#b8b8bc"></div>
<div class="t" style="left:118.80px;top:123.02px;font-size:6.3px;color:#7c7c88;font-weight:normal;-webkit-text-stroke:0.02px #7c7c88;;transform:scaleX(0.9);transform-origin:0 0">Übersetzter Name</div>
<svg class="a" style="left:199.2px;top:126.2px" width="4" height="3" viewBox="0 0 4 3"><path d="M0 2.6 L2 0 L4 2.6Z" fill="#666"/></svg>
<div class="t" style="left:208.00px;top:123.02px;font-size:6.3px;color:#7c7c88;font-weight:normal;-webkit-text-stroke:0.02px #7c7c88;;transform:scaleX(0.9);transform-origin:0 0">Referenzm...</div>
<div class="t" style="left:249.20px;top:123.02px;font-size:6.3px;color:#7c7c88;font-weight:normal;-webkit-text-stroke:0.02px #7c7c88;;transform:scaleX(0.9);transform-origin:0 0">External ID</div>
<div class="t" style="left:291.00px;top:123.02px;font-size:6.3px;color:#7c7c88;font-weight:normal;-webkit-text-stroke:0.02px #7c7c88;;transform:scaleX(0.9);transform-origin:0 0">Preisfa...</div>
<div class="a" style="left:117px;top:134.8px;width:202.5px;height:11.25px;background:#ffffff;border-bottom:0.6px solid #f1f1f4"></div>
<div class="a" style="left:206.2px;top:134.8px;width:113.3px;height:11.25px;background:#e3eefa"></div>
<div class="a" style="left:116.6px;top:134.8px;width:203px;height:11.25px;border:1px solid #8a8a94"></div>
<div class="t" style="left:118.80px;top:136.22px;font-size:6.3px;color:#33333d;font-weight:normal;-webkit-text-stroke:0.02px #33333d;;transform:scaleX(0.9);transform-origin:0 0">Aluminium</div>
<div class="t" style="left:208.00px;top:136.22px;font-size:6.3px;color:#1a1a24;font-weight:normal;-webkit-text-stroke:0.12px #1a1a24;;transform:scaleX(0.9);transform-origin:0 0">Undefiniert</div>
<div class="t" style="right:705.40px;top:136.22px;font-size:6.3px;color:#1a1a24;font-weight:normal;-webkit-text-stroke:0.12px #1a1a24;;transform:scaleX(0.9);transform-origin:100% 0">1,1500</div>
<svg class="a" style="left:110.6px;top:138.9px" width="3" height="3.6" viewBox="0 0 3 3.6"><path d="M0.1 0.1 L2.3 1.7 L0.1 3.3Z" fill="#555"/></svg>
<div class="a" style="left:117px;top:146.05px;width:202.5px;height:11.25px;background:#ffffff;border-bottom:0.6px solid #f1f1f4"></div>
<div class="t" style="left:118.80px;top:147.47px;font-size:6.3px;color:#50505a;font-weight:normal;-webkit-text-stroke:0.02px #50505a;;transform:scaleX(0.9);transform-origin:0 0">Gold</div>
<div class="t" style="left:208.00px;top:147.47px;font-size:6.3px;color:#50505a;font-weight:normal;-webkit-text-stroke:0.02px #50505a;;transform:scaleX(0.9);transform-origin:0 0">Undefiniert</div>
<div class="t" style="right:705.40px;top:147.47px;font-size:6.3px;color:#50505a;font-weight:normal;-webkit-text-stroke:0.02px #50505a;;transform:scaleX(0.9);transform-origin:100% 0">125,0000</div>
<div class="a" style="left:117px;top:157.3px;width:202.5px;height:11.25px;background:#ffffff;border-bottom:0.6px solid #f1f1f4"></div>
<div class="t" style="left:118.80px;top:158.72px;font-size:6.3px;color:#50505a;font-weight:normal;-webkit-text-stroke:0.02px #50505a;;transform:scaleX(0.9);transform-origin:0 0">Kupfer</div>
<div class="t" style="left:208.00px;top:158.72px;font-size:6.3px;color:#50505a;font-weight:normal;-webkit-text-stroke:0.02px #50505a;;transform:scaleX(0.9);transform-origin:0 0">Undefiniert</div>
<div class="t" style="right:705.40px;top:158.72px;font-size:6.3px;color:#50505a;font-weight:normal;-webkit-text-stroke:0.02px #50505a;;transform:scaleX(0.9);transform-origin:100% 0">1,0000</div>
<div class="a" style="left:117px;top:168.55px;width:202.5px;height:11.25px;background:#ffffff;border-bottom:0.6px solid #f1f1f4"></div>
<div class="t" style="left:118.80px;top:169.97px;font-size:6.3px;color:#50505a;font-weight:normal;-webkit-text-stroke:0.02px #50505a;;transform:scaleX(0.9);transform-origin:0 0">Papier</div>
<div class="t" style="left:208.00px;top:169.97px;font-size:6.3px;color:#50505a;font-weight:normal;-webkit-text-stroke:0.02px #50505a;;transform:scaleX(0.9);transform-origin:0 0">Undefiniert</div>
<div class="t" style="right:705.40px;top:169.97px;font-size:6.3px;color:#50505a;font-weight:normal;-webkit-text-stroke:0.02px #50505a;;transform:scaleX(0.9);transform-origin:100% 0">0,2000</div>
<div class="a" style="left:117px;top:179.8px;width:202.5px;height:11.25px;background:#ffffff;border-bottom:0.6px solid #f1f1f4"></div>
<div class="t" style="left:118.80px;top:181.22px;font-size:6.3px;color:#50505a;font-weight:normal;-webkit-text-stroke:0.02px #50505a;;transform:scaleX(0.9);transform-origin:0 0">Stahl</div>
<div class="t" style="left:208.00px;top:181.22px;font-size:6.3px;color:#50505a;font-weight:normal;-webkit-text-stroke:0.02px #50505a;;transform:scaleX(0.9);transform-origin:0 0">Undefiniert</div>
<div class="t" style="right:705.40px;top:181.22px;font-size:6.3px;color:#50505a;font-weight:normal;-webkit-text-stroke:0.02px #50505a;;transform:scaleX(0.9);transform-origin:100% 0">2,0000</div>
<div class="a" style="left:117px;top:191.05px;width:202.5px;height:11.25px;background:#ffffff;border-bottom:0.6px solid #f1f1f4"></div>
<div class="t" style="left:118.80px;top:192.47px;font-size:6.3px;color:#50505a;font-weight:normal;-webkit-text-stroke:0.02px #50505a;;transform:scaleX(0.9);transform-origin:0 0">Stahl beschichtet</div>
<div class="t" style="left:208.00px;top:192.47px;font-size:6.3px;color:#50505a;font-weight:normal;-webkit-text-stroke:0.02px #50505a;;transform:scaleX(0.9);transform-origin:0 0">Undefiniert</div>
<div class="t" style="right:705.40px;top:192.47px;font-size:6.3px;color:#50505a;font-weight:normal;-webkit-text-stroke:0.02px #50505a;;transform:scaleX(0.9);transform-origin:100% 0">0,0000</div>
<div class="a" style="left:117px;top:202.3px;width:202.5px;height:11.25px;background:#ffffff;border-bottom:0.6px solid #f1f1f4"></div>
<div class="t" style="left:118.80px;top:203.72px;font-size:6.3px;color:#50505a;font-weight:normal;-webkit-text-stroke:0.02px #50505a;;transform:scaleX(0.9);transform-origin:0 0">Zink</div>
<div class="t" style="left:208.00px;top:203.72px;font-size:6.3px;color:#50505a;font-weight:normal;-webkit-text-stroke:0.02px #50505a;;transform:scaleX(0.9);transform-origin:0 0">Undefiniert</div>
<div class="t" style="right:705.40px;top:203.72px;font-size:6.3px;color:#50505a;font-weight:normal;-webkit-text-stroke:0.02px #50505a;;transform:scaleX(0.9);transform-origin:100% 0">1,0000</div>
<div class="a" style="left:320px;top:119px;width:6.3px;height:485px;background:#e4e4e7"></div>
<svg class="a" style="left:322px;top:355px" width="3" height="9" viewBox="0 0 3 9"><path d="M0.3 0.3 L2.7 2.7 M2.7 0.3 L0.3 2.7 M0.3 3 L2.7 5.4 M2.7 3 L0.3 5.4 M0.3 5.7 L2.7 8.1 M2.7 5.7 L0.3 8.1" stroke="#b0b0b4" stroke-width="0.5"/></svg>
<div class="a" style="left:326px;top:119px;width:698px;height:485px;background:#ecebf0"></div>
<div class="t" style="left:336.90px;top:130.72px;font-size:6.3px;color:#7a7a88;font-weight:normal;-webkit-text-stroke:0.02px #7a7a88;;transform:scaleX(0.9);transform-origin:0 0">Name</div>
<div class="a" style="left:386.4px;top:130.8px;width:286px;height:10.2px;background:#ffffd8;border:0.6px solid #e8e8d0"></div>
<div class="t" style="left:336.90px;top:143.42px;font-size:6.3px;color:#7a7a88;font-weight:normal;-webkit-text-stroke:0.02px #7a7a88;;transform:scaleX(0.9);transform-origin:0 0">Übersetzter Name</div>
<div class="a" style="left:386.4px;top:143.5px;width:286px;height:10.2px;background:#eeedf2;border:0.6px solid #e2e2e6"></div>
<div class="t" style="left:336.90px;top:156.12px;font-size:6.3px;color:#7a7a88;font-weight:normal;-webkit-text-stroke:0.02px #7a7a88;;transform:scaleX(0.9);transform-origin:0 0">Maschinenname</div>
<div class="a" style="left:386.4px;top:156.2px;width:286px;height:10.2px;background:#ffffff;border:0.6px solid #e6e6ea"></div>
<div class="t" style="left:336.90px;top:168.82px;font-size:6.3px;color:#7a7a88;font-weight:normal;-webkit-text-stroke:0.02px #7a7a88;;transform:scaleX(0.9);transform-origin:0 0">Werkstoffindex</div>
<div class="a" style="left:386.4px;top:168.9px;width:286px;height:10.2px;background:#ffffff;border:0.6px solid #e6e6ea"></div>
<div class="t" style="left:336.90px;top:181.52px;font-size:6.3px;color:#7a7a88;font-weight:normal;-webkit-text-stroke:0.02px #7a7a88;;transform:scaleX(0.9);transform-origin:0 0">Zugfestigkeit</div>
<div class="a" style="left:386.4px;top:181.6px;width:286px;height:10.2px;background:#ffffff;border:0.6px solid #e6e6ea"></div>
<div class="t" style="left:389.00px;top:130.92px;font-size:6.3px;color:#222;font-weight:normal;-webkit-text-stroke:0.02px #222;;transform:scaleX(0.9);transform-origin:0 0">Aluminium</div>
<div class="t" style="left:389.00px;top:143.62px;font-size:6.3px;color:#222;font-weight:normal;-webkit-text-stroke:0.02px #222;;transform:scaleX(0.9);transform-origin:0 0">Aluminium</div>
<div class="t" style="right:362.80px;top:169.02px;font-size:6.3px;color:#333;font-weight:normal;-webkit-text-stroke:0.02px #333;;transform:scaleX(0.9);transform-origin:100% 0">0</div>
<div class="t" style="right:362.80px;top:181.72px;font-size:6.3px;color:#333;font-weight:normal;-webkit-text-stroke:0.02px #333;;transform:scaleX(0.9);transform-origin:100% 0">0,00 N/mm²</div>
<svg class="a" style="left:666px;top:170.3px" width="4" height="8" viewBox="0 0 4 8"><path d="M0.5 2.6 L2 0.9 L3.5 2.6Z M0.5 5.4 L2 7.1 L3.5 5.4Z" fill="#555" stroke="#555" stroke-width="0.4"/></svg>
<svg class="a" style="left:666px;top:183.0px" width="4" height="8" viewBox="0 0 4 8"><path d="M0.5 2.6 L2 0.9 L3.5 2.6Z M0.5 5.4 L2 7.1 L3.5 5.4Z" fill="#555" stroke="#555" stroke-width="0.4"/></svg>
<div class="t" style="left:677.70px;top:130.72px;font-size:6.3px;color:#7a7a88;font-weight:normal;-webkit-text-stroke:0.02px #7a7a88;;transform:scaleX(0.9);transform-origin:0 0">Erstellt am</div>
<div class="a" style="left:727.1px;top:130.8px;width:286.6px;height:10.2px;background:#f1f1f4;border:0.6px solid #e4e4e8"></div>
<div class="t" style="left:677.70px;top:143.42px;font-size:6.3px;color:#7a7a88;font-weight:normal;-webkit-text-stroke:0.02px #7a7a88;;transform:scaleX(0.9);transform-origin:0 0">Geändert am</div>
<div class="a" style="left:727.1px;top:143.5px;width:286.6px;height:10.2px;background:#f1f1f4;border:0.6px solid #e4e4e8"></div>
<div class="t" style="left:677.70px;top:156.12px;font-size:6.3px;color:#7a7a88;font-weight:normal;-webkit-text-stroke:0.02px #7a7a88;;transform:scaleX(0.9);transform-origin:0 0">External ID</div>
<div class="a" style="left:727.1px;top:156.2px;width:286.6px;height:10.2px;background:#ffffff;border:0.6px solid #e4e4e8"></div>
<div class="t" style="left:677.70px;top:168.82px;font-size:6.3px;color:#7a7a88;font-weight:normal;-webkit-text-stroke:0.02px #7a7a88;;transform:scaleX(0.9);transform-origin:0 0">Preisfaktor</div>
<div class="a" style="left:727.1px;top:168.9px;width:286.6px;height:10.2px;background:#ffffff;border:0.6px solid #e4e4e8"></div>
<div class="t" style="left:677.70px;top:181.52px;font-size:6.3px;color:#7a7a88;font-weight:normal;-webkit-text-stroke:0.02px #7a7a88;;transform:scaleX(0.9);transform-origin:0 0">Referenzmaterial</div>
<div class="a" style="left:727.1px;top:181.6px;width:286.6px;height:10.2px;background:#ffffff;border:0.6px solid #e4e4e8"></div>
<div class="t" style="left:729.50px;top:130.92px;font-size:6.3px;color:#333;font-weight:normal;-webkit-text-stroke:0.02px #333;;transform:scaleX(0.9);transform-origin:0 0">01/01/0001 01:00:00 [System]</div>
<div class="t" style="left:729.50px;top:143.62px;font-size:6.3px;color:#333;font-weight:normal;-webkit-text-stroke:0.02px #333;;transform:scaleX(0.9);transform-origin:0 0">07/11/2012 10:32:40 [Mr. Bendex Testuser]</div>
<div class="t" style="right:22.00px;top:169.02px;font-size:6.3px;color:#333;font-weight:normal;-webkit-text-stroke:0.02px #333;;transform:scaleX(0.9);transform-origin:100% 0">1,1500</div>
<svg class="a" style="left:1006.7px;top:170.3px" width="4" height="8" viewBox="0 0 4 8"><path d="M0.5 2.6 L2 0.9 L3.5 2.6Z M0.5 5.4 L2 7.1 L3.5 5.4Z" fill="#555" stroke="#555" stroke-width="0.4"/></svg>
<div class="t" style="left:729.50px;top:181.72px;font-size:6.3px;color:#222;font-weight:normal;-webkit-text-stroke:0.02px #222;;transform:scaleX(0.9);transform-origin:0 0">Undefiniert</div>
<svg class="a" style="left:1007px;top:185.4px" width="4" height="3" viewBox="0 0 4 3"><path d="M0.2 0.2 H3.4 L1.8 2Z" fill="#555"/></svg>
<div class="a" style="left:336.8px;top:197.3px;width:676.2px;height:22.6px;background:#2369ad"></div>
<svg class="a" style="left:348px;top:203.5px" width="8" height="9" viewBox="0 0 8 9"><defs><linearGradient id="dr" x1="0" y1="0" x2="1" y2="0"><stop offset="0" stop-color="#7a7a80"/><stop offset="0.35" stop-color="#e6e6ea"/><stop offset="1" stop-color="#55565c"/></linearGradient></defs><rect x="0.6" y="0.8" width="6.8" height="7.6" rx="1.3" fill="url(#dr)"/><ellipse cx="4" cy="1.6" rx="3.4" ry="0.9" fill="#c8c8cc"/></svg>
<div class="t" style="left:357.50px;top:204.22px;font-size:6.3px;color:#9ab6d8;font-weight:normal;-webkit-text-stroke:0.02px #9ab6d8;;transform:scaleX(0.9);transform-origin:0 0">Materialien</div>
<svg class="a" style="left:406.5px;top:203.5px" width="9" height="9" viewBox="0 0 9 9"><rect x="0.4" y="0.4" width="8.2" height="8.2" fill="#e8eef6" stroke="#b8c8dc" stroke-width="0.5"/><rect x="1.0" y="1.0" width="2.1" height="2.2" fill="#f4a0a0"/><rect x="1.0" y="3.4" width="2.1" height="2.2" fill="#a0c4f0"/><rect x="1.0" y="5.8" width="2.1" height="2.2" fill="#a0e0e0"/><rect x="3.3" y="1.0" width="2.1" height="2.2" fill="#f6e08a"/><rect x="3.3" y="3.4" width="2.1" height="2.2" fill="#d4b0e8"/><rect x="3.3" y="5.8" width="2.1" height="2.2" fill="#e8a8c8"/><rect x="5.6" y="1.0" width="2.1" height="2.2" fill="#a8dca0"/><rect x="5.6" y="3.4" width="2.1" height="2.2" fill="#f4c090"/><rect x="5.6" y="5.8" width="2.1" height="2.2" fill="#c0e0a0"/></svg>
<div class="t" style="left:416.80px;top:204.22px;font-size:6.3px;color:#9ab6d8;font-weight:normal;-webkit-text-stroke:0.02px #9ab6d8;;transform:scaleX(0.9);transform-origin:0 0">Beschichtungen</div>
<svg class="a" style="left:479px;top:203.5px" width="8" height="9" viewBox="0 0 8 9"><defs><linearGradient id="hi" x1="0" y1="0" x2="0" y2="1"><stop offset="0" stop-color="#7eb0ea"/><stop offset="1" stop-color="#2f64b8"/></linearGradient></defs><rect x="0.6" y="0.6" width="6.8" height="7.8" rx="1" fill="url(#hi)" stroke="#9cc0ea" stroke-width="0.5"/><rect x="3.4" y="1.6" width="1.2" height="1.1" fill="#fff"/><rect x="3.4" y="3.4" width="1.2" height="3.6" fill="#fff"/></svg>
<div class="t" style="left:488.00px;top:204.22px;font-size:6.3px;color:#9ab6d8;font-weight:normal;-webkit-text-stroke:0.02px #9ab6d8;;transform:scaleX(0.9);transform-origin:0 0">Historie</div>
<div class="a" style="left:336.8px;top:219.9px;width:269.2px;height:18.2px;background:#e2e2e6"></div>
<svg class="a" style="left:339.2px;top:222.5px" width="2" height="13" viewBox="0 0 2 13"><rect x="0" y="0.0" width="1" height="0.8" fill="#aaa"/><rect x="1" y="0.8" width="1" height="0.8" fill="#aaa"/><rect x="0" y="1.6" width="1" height="0.8" fill="#aaa"/><rect x="1" y="2.4000000000000004" width="1" height="0.8" fill="#aaa"/><rect x="0" y="3.2" width="1" height="0.8" fill="#aaa"/><rect x="1" y="4.0" width="1" height="0.8" fill="#aaa"/><rect x="0" y="4.800000000000001" width="1" height="0.8" fill="#aaa"/><rect x="1" y="5.6000000000000005" width="1" height="0.8" fill="#aaa"/><rect x="0" y="6.4" width="1" height="0.8" fill="#aaa"/><rect x="1" y="7.2" width="1" height="0.8" fill="#aaa"/><rect x="0" y="8.0" width="1" height="0.8" fill="#aaa"/><rect x="1" y="8.8" width="1" height="0.8" fill="#aaa"/><rect x="0" y="9.600000000000001" width="1" height="0.8" fill="#aaa"/><rect x="1" y="10.400000000000002" width="1" height="0.8" fill="#aaa"/><rect x="0" y="11.200000000000001" width="1" height="0.8" fill="#aaa"/><rect x="1" y="12.000000000000002" width="1" height="0.8" fill="#aaa"/></svg>
<div class="a" style="left:398.5px;top:222px;width:0.7px;height:14px;background:#d4d4d8"></div>
<div class="a" style="left:434.8px;top:222px;width:0.7px;height:14px;background:#d4d4d8"></div>
<div class="a" style="left:455.5px;top:222px;width:0.7px;height:14px;background:#d4d4d8"></div>
<div class="a" style="left:473.5px;top:222px;width:0.7px;height:14px;background:#d4d4d8"></div>
<div class="a" style="left:493.3px;top:222px;width:0.7px;height:14px;background:#d4d4d8"></div>
<div class="a" style="left:529.7px;top:222px;width:0.7px;height:14px;background:#d4d4d8"></div>
<div class="a" style="left:549.5px;top:222px;width:0.7px;height:14px;background:#d4d4d8"></div>
<div class="a" style="left:580.5px;top:222px;width:0.7px;height:14px;background:#d4d4d8"></div>
<svg class="a" style="left:346.5px;top:224.4px" width="8" height="9.5" viewBox="0 0 8 9.5"><path d="M2.4 0.5 H7.4 V9 H0.6 V2.3Z" fill="#f4f8fd" stroke="#6e9ad0" stroke-width="0.8"/></svg>
<svg class="a" style="left:363px;top:228.2px" width="3" height="2" viewBox="0 0 3 2"><path d="M0 0 H2.6 L1.3 1.6Z" fill="#444"/></svg>
<svg class="a" style="left:373px;top:224.2px" width="10" height="10" viewBox="0 0 10 10"><g transform="scale(0.55)"><g transform="translate(0.3,0.3)"><path d="M0 2.4 L2.4 0 H9.6 V7.2 L7.2 9.6 H0Z" fill="#56c420"/><path d="M0 2.4 L2.4 0 H9.6 L7.2 2.4Z" fill="#8fe060"/><path d="M7.2 2.4 L9.6 0 V7.2 L7.2 9.6Z" fill="#2c9a14"/></g><g transform="translate(5.6,5.8)"><path d="M0 2.4 L2.4 0 H9.6 V7.2 L7.2 9.6 H0Z" fill="#56c420"/><path d="M0 2.4 L2.4 0 H9.6 L7.2 2.4Z" fill="#8fe060"/><path d="M7.2 2.4 L9.6 0 V7.2 L7.2 9.6Z" fill="#2c9a14"/></g></g></svg>
<svg class="a" style="left:390px;top:228.2px" width="3" height="2" viewBox="0 0 3 2"><path d="M0 0 H2.6 L1.3 1.6Z" fill="#444"/></svg>
<svg class="a" style="left:404.5px;top:224.2px" width="10" height="10" viewBox="0 0 10 10"><path d="M2 0.5 H7 V8.8 H0.6 V2Z" fill="#f4f8fd" stroke="#6e9ad0" stroke-width="0.8"/><circle cx="6.6" cy="6.8" r="2.6" fill="#3aa52a"/><rect x="5.4" y="6.3" width="2.4" height="1" fill="#fff"/></svg>
<svg class="a" style="left:420.5px;top:224.2px" width="10" height="10" viewBox="0 0 10 10"><path d="M2 0.5 H7 V8.8 H0.6 V2Z" fill="#f4f8fd" stroke="#6e9ad0" stroke-width="0.8"/><circle cx="6.6" cy="6.8" r="2.6" fill="#d83030"/><rect x="5.4" y="6.3" width="2.4" height="1" fill="#fff"/></svg>
<svg class="a" style="left:441px;top:224.8px" width="8.5" height="8.5" viewBox="0 0 8.5 8.5"><path d="M0.8 0.8 L7.7 7.7 M7.7 0.8 L0.8 7.7" stroke="#d22f2f" stroke-width="1.3"/></svg>
<svg class="a" style="left:459.5px;top:225px" width="9" height="9" viewBox="0 0 9 9"><rect x="0.5" y="0.5" width="6.5" height="6.5" fill="#c8c8cc"/><rect x="2.5" y="2.5" width="6" height="6" fill="#b4b4b8"/></svg>
<svg class="a" style="left:478.5px;top:224px" width="10" height="10" viewBox="0 0 10 10"><rect x="0.5" y="4" width="7" height="5.5" fill="#fff" stroke="#4d7fc0" stroke-width="0.8"/><rect x="0.5" y="4" width="7" height="1.6" fill="#4d7fc0"/><rect x="5" y="0.5" width="4.5" height="3.6" fill="#fff" stroke="#4aa040" stroke-width="0.8"/></svg>
<svg class="a" style="left:499.5px;top:225px" width="8" height="8" viewBox="0 0 8 8"><circle cx="4" cy="4" r="3.6" fill="#b9b9bd"/></svg>
<svg class="a" style="left:516px;top:225px" width="8" height="8" viewBox="0 0 8 8"><circle cx="4" cy="4" r="3.6" fill="#3aa52a"/><path d="M4 2 L5.6 4.4 H2.4Z" fill="#fff"/></svg>
<svg class="a" style="left:535px;top:224.8px" width="9" height="9" viewBox="0 0 9 9"><rect x="0.5" y="0.8" width="8" height="7.4" fill="#d6e4f4" stroke="#8aa8cc" stroke-width="0.6"/><text x="1.2" y="6.8" font-size="5" font-family="Liberation Sans" font-weight="bold" fill="#3a86c8">XD</text></svg>
<svg class="a" style="left:555px;top:224.2px" width="9" height="10" viewBox="0 0 9 10"><rect x="0.5" y="0.5" width="6" height="7" fill="#eef2f8" stroke="#6e8ab0" stroke-width="0.6"/><rect x="2.4" y="2.6" width="6.2" height="6.8" rx="0.5" fill="#3e4c66"/><rect x="3.6" y="3.2" width="3.8" height="2" fill="#dfe6ee"/><rect x="3.6" y="6.8" width="3.8" height="2" fill="#6fa0d8"/></svg>
<svg class="a" style="left:572px;top:228.2px" width="3" height="2" viewBox="0 0 3 2"><path d="M0 0 H2.6 L1.3 1.6Z" fill="#333"/></svg>
<svg class="a" style="left:586.5px;top:224.2px" width="10" height="10" viewBox="0 0 10 10"><path d="M1.5 0.5 H6.5 L7.5 1.5 V8.8 H0.8 V1.2Z" fill="#f4f8fd" stroke="#6e9ad0" stroke-width="0.7"/><circle cx="5.6" cy="4" r="2" fill="none" stroke="#3a6ea8" stroke-width="0.8"/><path d="M4.2 5.4 L1.8 8.4" stroke="#d09030" stroke-width="1.1"/></svg>
<svg class="a" style="left:600px;top:228px" width="4" height="5" viewBox="0 0 4 5"><rect x="0" y="0" width="3.6" height="0.6" fill="#666"/><path d="M0 1.6 H3.6 L1.8 3.8Z" fill="#444"/></svg>
<div class="a" style="left:336.8px;top:238.1px;width:676.2px;height:339px;background:#f7f7f9"></div>
<div class="a" style="left:336.8px;top:577.3px;width:676.2px;height:1.5px;background:#ebebef"></div>
<div class="a" style="left:336.8px;top:579px;width:676.2px;height:14px;background:#ffffff"></div>
<div class="a" style="left:336.8px;top:238.1px;width:676.2px;height:15.2px;background:#dcdcde"></div>
<div class="a" style="left:336.8px;top:253.3px;width:9.8px;height:146.4px;background:#dcdcde"></div>
<div class="a" style="left:346.6px;top:238.1px;width:0.7px;height:15.2px;background:#d0d0d4"></div>
<div class="a" style="left:711.2px;top:238.1px;width:0.7px;height:15.2px;background:#d0d0d4"></div>
<div class="a" style="left:775.5px;top:238.1px;width:0.7px;height:15.2px;background:#d0d0d4"></div>
<div class="a" style="left:838.4px;top:238.1px;width:0.7px;height:15.2px;background:#d0d0d4"></div>
<div class="a" style="left:902px;top:238.1px;width:0.7px;height:15.2px;background:#d0d0d4"></div>
<div class="a" style="left:947.5px;top:238.1px;width:0.7px;height:15.2px;background:#d0d0d4"></div>
<div class="a" style="left:336.8px;top:252.9px;width:676.2px;height:0.7px;background:#c0c0c4"></div>
<div class="t" style="left:349.00px;top:241.02px;font-size:6.3px;color:#7c7c88;font-weight:normal;-webkit-text-stroke:0.02px #7c7c88;;transform:scaleX(0.9);transform-origin:0 0">Übersetzter Name</div>
<svg class="a" style="left:704.6px;top:244.5px" width="4" height="3" viewBox="0 0 4 3"><path d="M0 2.6 L2 0 L4 2.6Z" fill="#666"/></svg>
<div class="t" style="left:713.80px;top:241.02px;font-size:6.3px;color:#7c7c88;font-weight:normal;-webkit-text-stroke:0.02px #7c7c88;;transform:scaleX(0.9);transform-origin:0 0">Farbe Vorne</div>
<div class="t" style="left:778.00px;top:241.02px;font-size:6.3px;color:#7c7c88;font-weight:normal;-webkit-text-stroke:0.02px #7c7c88;;transform:scaleX(0.9);transform-origin:0 0">Farbe Hinten</div>
<div class="t" style="left:841.00px;top:241.02px;font-size:6.3px;color:#7c7c88;font-weight:normal;-webkit-text-stroke:0.02px #7c7c88;;transform:scaleX(0.9);transform-origin:0 0">Zuschnittsgruppe</div>
<div class="t" style="left:904.50px;top:241.02px;font-size:6.3px;color:#7c7c88;font-weight:normal;-webkit-text-stroke:0.02px #7c7c88;;transform:scaleX(0.9);transform-origin:0 0">Aktiv</div>
<div class="t" style="left:950.00px;top:241.02px;font-size:6.3px;color:#7c7c88;font-weight:normal;-webkit-text-stroke:0.02px #7c7c88;;transform:scaleX(0.9);transform-origin:0 0">Externe ID</div>
<div class="a" style="left:346.6px;top:253.4px;width:666.4px;height:11.25px;background:#ffffff;border-bottom:0.6px solid #f1f1f4"></div>
<div class="a" style="left:711.2px;top:253.4px;width:301.8px;height:11.25px;background:#f1f5fb;border-bottom:0.6px solid #f1f1f4"></div>
<svg class="a" style="left:340.2px;top:257.3px" width="3" height="3.6" viewBox="0 0 3 3.6"><path d="M0.1 0.1 L2.3 1.7 L0.1 3.3Z" fill="#555"/></svg>
<div class="t" style="left:349.00px;top:254.72px;font-size:6.3px;color:#50505a;font-weight:normal;-webkit-text-stroke:0.02px #50505a;;transform:scaleX(0.9);transform-origin:0 0">Aluminium - 0.70mm</div>
<svg class="a" style="left:714.8px;top:256.5px" width="12.2" height="5.6" viewBox="0 0 12.2 5.6"><rect x="0.4" y="0.4" width="11.4" height="4.8" fill="#788ca5" stroke="#3c4a5c" stroke-width="0.7"/></svg>
<div class="t" style="left:729.50px;top:254.72px;font-size:6.3px;color:#22222c;font-weight:normal;-webkit-text-stroke:0.12px #22222c;;transform:scaleX(0.9);transform-origin:0 0">120, 140, 165</div>
<svg class="a" style="left:778.3px;top:256.5px" width="12.2" height="5.6" viewBox="0 0 12.2 5.6"><rect x="0.4" y="0.4" width="11.4" height="4.8" fill="#aaafb4" stroke="#55585c" stroke-width="0.7"/></svg>
<div class="t" style="left:793.00px;top:254.72px;font-size:6.3px;color:#22222c;font-weight:normal;-webkit-text-stroke:0.12px #22222c;;transform:scaleX(0.9);transform-origin:0 0">170, 175, 180</div>
<svg class="a" style="left:921.8px;top:255.8px" width="7" height="7" viewBox="0 0 7 7"><rect x="0.4" y="0.4" width="6.2" height="6.2" fill="#fff" stroke="#d0d0d4" stroke-width="0.6"/><path d="M1.6 3.6 L2.9 4.9 L5.4 1.8" fill="none" stroke="#555" stroke-width="0.8"/></svg>
<div class="a" style="left:346.6px;top:264.65px;width:666.4px;height:11.25px;background:#ffffff;border-bottom:0.6px solid #f1f1f4"></div>
<div class="t" style="left:349.00px;top:265.97px;font-size:6.3px;color:#50505a;font-weight:normal;-webkit-text-stroke:0.02px #50505a;;transform:scaleX(0.9);transform-origin:0 0">Aluminium - 0.80mm - vorbeschichtet - RAL9050 - 25um - Testtext</div>
<svg class="a" style="left:714.8px;top:267.75px" width="12.2" height="5.6" viewBox="0 0 12.2 5.6"><rect x="0.4" y="0.4" width="11.4" height="4.8" fill="#788ca5" stroke="#3c4a5c" stroke-width="0.7"/></svg>
<div class="t" style="left:729.50px;top:265.97px;font-size:6.3px;color:#555560;font-weight:normal;-webkit-text-stroke:0.02px #555560;;transform:scaleX(0.9);transform-origin:0 0">120, 140, 165</div>
<svg class="a" style="left:778.3px;top:267.75px" width="12.2" height="5.6" viewBox="0 0 12.2 5.6"><rect x="0.4" y="0.4" width="11.4" height="4.8" fill="#aaafb4" stroke="#55585c" stroke-width="0.7"/></svg>
<div class="t" style="left:793.00px;top:265.97px;font-size:6.3px;color:#555560;font-weight:normal;-webkit-text-stroke:0.02px #555560;;transform:scaleX(0.9);transform-origin:0 0">170, 175, 180</div>
<svg class="a" style="left:921.8px;top:267.04999999999995px" width="7" height="7" viewBox="0 0 7 7"><rect x="0.4" y="0.4" width="6.2" height="6.2" fill="#fff" stroke="#d0d0d4" stroke-width="0.6"/><path d="M1.6 3.6 L2.9 4.9 L5.4 1.8" fill="none" stroke="#555" stroke-width="0.8"/></svg>
<div class="a" style="left:346.6px;top:275.9px;width:666.4px;height:11.25px;background:#ffffff;border-bottom:0.6px solid #f1f1f4"></div>
<div class="t" style="left:349.00px;top:277.22px;font-size:6.3px;color:#50505a;font-weight:normal;-webkit-text-stroke:0.02px #50505a;;transform:scaleX(0.9);transform-origin:0 0">Aluminium - 1.00mm xyz</div>
<svg class="a" style="left:714.8px;top:279.0px" width="12.2" height="5.6" viewBox="0 0 12.2 5.6"><rect x="0.4" y="0.4" width="11.4" height="4.8" fill="#788ca5" stroke="#3c4a5c" stroke-width="0.7"/></svg>
<div class="t" style="left:729.50px;top:277.22px;font-size:6.3px;color:#555560;font-weight:normal;-webkit-text-stroke:0.02px #555560;;transform:scaleX(0.9);transform-origin:0 0">120, 140, 165</div>
<svg class="a" style="left:778.3px;top:279.0px" width="12.2" height="5.6" viewBox="0 0 12.2 5.6"><rect x="0.4" y="0.4" width="11.4" height="4.8" fill="#aaafb4" stroke="#55585c" stroke-width="0.7"/></svg>
<div class="t" style="left:793.00px;top:277.22px;font-size:6.3px;color:#555560;font-weight:normal;-webkit-text-stroke:0.02px #555560;;transform:scaleX(0.9);transform-origin:0 0">170, 175, 180</div>
<svg class="a" style="left:921.8px;top:278.29999999999995px" width="7" height="7" viewBox="0 0 7 7"><rect x="0.4" y="0.4" width="6.2" height="6.2" fill="#fff" stroke="#d0d0d4" stroke-width="0.6"/><path d="M1.6 3.6 L2.9 4.9 L5.4 1.8" fill="none" stroke="#555" stroke-width="0.8"/></svg>
<div class="a" style="left:346.6px;top:287.15px;width:666.4px;height:11.25px;background:#ffffff;border-bottom:0.6px solid #f1f1f4"></div>
<div class="t" style="left:349.00px;top:288.47px;font-size:6.3px;color:#50505a;font-weight:normal;-webkit-text-stroke:0.02px #50505a;;transform:scaleX(0.9);transform-origin:0 0">Aluminium - 1.25mm</div>
<svg class="a" style="left:714.8px;top:290.25px" width="12.2" height="5.6" viewBox="0 0 12.2 5.6"><rect x="0.4" y="0.4" width="11.4" height="4.8" fill="#788ca5" stroke="#3c4a5c" stroke-width="0.7"/></svg>
<div class="t" style="left:729.50px;top:288.47px;font-size:6.3px;color:#555560;font-weight:normal;-webkit-text-stroke:0.02px #555560;;transform:scaleX(0.9);transform-origin:0 0">120, 140, 165</div>
<svg class="a" style="left:778.3px;top:290.25px" width="12.2" height="5.6" viewBox="0 0 12.2 5.6"><rect x="0.4" y="0.4" width="11.4" height="4.8" fill="#aaafb4" stroke="#55585c" stroke-width="0.7"/></svg>
<div class="t" style="left:793.00px;top:288.47px;font-size:6.3px;color:#555560;font-weight:normal;-webkit-text-stroke:0.02px #555560;;transform:scaleX(0.9);transform-origin:0 0">170, 175, 180</div>
<svg class="a" style="left:921.8px;top:289.54999999999995px" width="7" height="7" viewBox="0 0 7 7"><rect x="0.4" y="0.4" width="6.2" height="6.2" fill="#fff" stroke="#d0d0d4" stroke-width="0.6"/><path d="M1.6 3.6 L2.9 4.9 L5.4 1.8" fill="none" stroke="#555" stroke-width="0.8"/></svg>
<div class="a" style="left:346.6px;top:298.4px;width:666.4px;height:11.25px;background:#ffffff;border-bottom:0.6px solid #f1f1f4"></div>
<div class="t" style="left:349.00px;top:299.72px;font-size:6.3px;color:#50505a;font-weight:normal;-webkit-text-stroke:0.02px #50505a;;transform:scaleX(0.9);transform-origin:0 0">Aluminium - 1.5mm</div>
<svg class="a" style="left:714.8px;top:301.5px" width="12.2" height="5.6" viewBox="0 0 12.2 5.6"><rect x="0.4" y="0.4" width="11.4" height="4.8" fill="#788ca5" stroke="#3c4a5c" stroke-width="0.7"/></svg>
<div class="t" style="left:729.50px;top:299.72px;font-size:6.3px;color:#555560;font-weight:normal;-webkit-text-stroke:0.02px #555560;;transform:scaleX(0.9);transform-origin:0 0">120, 140, 165</div>
<svg class="a" style="left:778.3px;top:301.5px" width="12.2" height="5.6" viewBox="0 0 12.2 5.6"><rect x="0.4" y="0.4" width="11.4" height="4.8" fill="#aaafb4" stroke="#55585c" stroke-width="0.7"/></svg>
<div class="t" style="left:793.00px;top:299.72px;font-size:6.3px;color:#555560;font-weight:normal;-webkit-text-stroke:0.02px #555560;;transform:scaleX(0.9);transform-origin:0 0">170, 175, 180</div>
<svg class="a" style="left:921.8px;top:300.79999999999995px" width="7" height="7" viewBox="0 0 7 7"><rect x="0.4" y="0.4" width="6.2" height="6.2" fill="#fff" stroke="#d0d0d4" stroke-width="0.6"/><path d="M1.6 3.6 L2.9 4.9 L5.4 1.8" fill="none" stroke="#555" stroke-width="0.8"/></svg>
<div class="a" style="left:346.6px;top:309.65px;width:666.4px;height:11.25px;background:#ffffff;border-bottom:0.6px solid #f1f1f4"></div>
<div class="t" style="left:349.00px;top:310.97px;font-size:6.3px;color:#50505a;font-weight:normal;-webkit-text-stroke:0.02px #50505a;;transform:scaleX(0.9);transform-origin:0 0">Aluminium - 10.0mm</div>
<svg class="a" style="left:714.8px;top:312.75px" width="12.2" height="5.6" viewBox="0 0 12.2 5.6"><rect x="0.4" y="0.4" width="11.4" height="4.8" fill="#788ca5" stroke="#3c4a5c" stroke-width="0.7"/></svg>
<div class="t" style="left:729.50px;top:310.97px;font-size:6.3px;color:#555560;font-weight:normal;-webkit-text-stroke:0.02px #555560;;transform:scaleX(0.9);transform-origin:0 0">120, 140, 165</div>
<svg class="a" style="left:778.3px;top:312.75px" width="12.2" height="5.6" viewBox="0 0 12.2 5.6"><rect x="0.4" y="0.4" width="11.4" height="4.8" fill="#aaafb4" stroke="#55585c" stroke-width="0.7"/></svg>
<div class="t" style="left:793.00px;top:310.97px;font-size:6.3px;color:#555560;font-weight:normal;-webkit-text-stroke:0.02px #555560;;transform:scaleX(0.9);transform-origin:0 0">170, 175, 180</div>
<svg class="a" style="left:921.8px;top:312.04999999999995px" width="7" height="7" viewBox="0 0 7 7"><rect x="0.4" y="0.4" width="6.2" height="6.2" fill="#fff" stroke="#d0d0d4" stroke-width="0.6"/><path d="M1.6 3.6 L2.9 4.9 L5.4 1.8" fill="none" stroke="#555" stroke-width="0.8"/></svg>
<div class="a" style="left:346.6px;top:320.9px;width:666.4px;height:11.25px;background:#ffffff;border-bottom:0.6px solid #f1f1f4"></div>
<div class="t" style="left:349.00px;top:322.22px;font-size:6.3px;color:#50505a;font-weight:normal;-webkit-text-stroke:0.02px #50505a;;transform:scaleX(0.9);transform-origin:0 0">Aluminium - 2.0mm</div>
<svg class="a" style="left:714.8px;top:324.0px" width="12.2" height="5.6" viewBox="0 0 12.2 5.6"><rect x="0.4" y="0.4" width="11.4" height="4.8" fill="#788ca5" stroke="#3c4a5c" stroke-width="0.7"/></svg>
<div class="t" style="left:729.50px;top:322.22px;font-size:6.3px;color:#555560;font-weight:normal;-webkit-text-stroke:0.02px #555560;;transform:scaleX(0.9);transform-origin:0 0">120, 140, 165</div>
<svg class="a" style="left:778.3px;top:324.0px" width="12.2" height="5.6" viewBox="0 0 12.2 5.6"><rect x="0.4" y="0.4" width="11.4" height="4.8" fill="#aaafb4" stroke="#55585c" stroke-width="0.7"/></svg>
<div class="t" style="left:793.00px;top:322.22px;font-size:6.3px;color:#555560;font-weight:normal;-webkit-text-stroke:0.02px #555560;;transform:scaleX(0.9);transform-origin:0 0">170, 175, 180</div>
<svg class="a" style="left:921.8px;top:323.29999999999995px" width="7" height="7" viewBox="0 0 7 7"><rect x="0.4" y="0.4" width="6.2" height="6.2" fill="#fff" stroke="#d0d0d4" stroke-width="0.6"/><path d="M1.6 3.6 L2.9 4.9 L5.4 1.8" fill="none" stroke="#555" stroke-width="0.8"/></svg>
<div class="a" style="left:346.6px;top:332.15px;width:666.4px;height:11.25px;background:#ffffff;border-bottom:0.6px solid #f1f1f4"></div>
<div class="t" style="left:349.00px;top:333.47px;font-size:6.3px;color:#50505a;font-weight:normal;-webkit-text-stroke:0.02px #50505a;;transform:scaleX(0.9);transform-origin:0 0">Aluminium - 2.3mm</div>
<svg class="a" style="left:714.8px;top:335.25px" width="12.2" height="5.6" viewBox="0 0 12.2 5.6"><rect x="0.4" y="0.4" width="11.4" height="4.8" fill="#788ca5" stroke="#3c4a5c" stroke-width="0.7"/></svg>
<div class="t" style="left:729.50px;top:333.47px;font-size:6.3px;color:#555560;font-weight:normal;-webkit-text-stroke:0.02px #555560;;transform:scaleX(0.9);transform-origin:0 0">120, 140, 165</div>
<svg class="a" style="left:778.3px;top:335.25px" width="12.2" height="5.6" viewBox="0 0 12.2 5.6"><rect x="0.4" y="0.4" width="11.4" height="4.8" fill="#aaafb4" stroke="#55585c" stroke-width="0.7"/></svg>
<div class="t" style="left:793.00px;top:333.47px;font-size:6.3px;color:#555560;font-weight:normal;-webkit-text-stroke:0.02px #555560;;transform:scaleX(0.9);transform-origin:0 0">170, 175, 180</div>
<svg class="a" style="left:921.8px;top:334.54999999999995px" width="7" height="7" viewBox="0 0 7 7"><rect x="0.4" y="0.4" width="6.2" height="6.2" fill="#fff" stroke="#d0d0d4" stroke-width="0.6"/><path d="M1.6 3.6 L2.9 4.9 L5.4 1.8" fill="none" stroke="#555" stroke-width="0.8"/></svg>
<div class="a" style="left:346.6px;top:343.4px;width:666.4px;height:11.25px;background:#ffffff;border-bottom:0.6px solid #f1f1f4"></div>
<div class="t" style="left:349.00px;top:344.72px;font-size:6.3px;color:#50505a;font-weight:normal;-webkit-text-stroke:0.02px #50505a;;transform:scaleX(0.9);transform-origin:0 0">Aluminium - 3.0mm</div>
<svg class="a" style="left:714.8px;top:346.5px" width="12.2" height="5.6" viewBox="0 0 12.2 5.6"><rect x="0.4" y="0.4" width="11.4" height="4.8" fill="#788ca5" stroke="#3c4a5c" stroke-width="0.7"/></svg>
<div class="t" style="left:729.50px;top:344.72px;font-size:6.3px;color:#555560;font-weight:normal;-webkit-text-stroke:0.02px #555560;;transform:scaleX(0.9);transform-origin:0 0">120, 140, 165</div>
<svg class="a" style="left:778.3px;top:346.5px" width="12.2" height="5.6" viewBox="0 0 12.2 5.6"><rect x="0.4" y="0.4" width="11.4" height="4.8" fill="#aaafb4" stroke="#55585c" stroke-width="0.7"/></svg>
<div class="t" style="left:793.00px;top:344.72px;font-size:6.3px;color:#555560;font-weight:normal;-webkit-text-stroke:0.02px #555560;;transform:scaleX(0.9);transform-origin:0 0">170, 175, 180</div>
<svg class="a" style="left:921.8px;top:345.79999999999995px" width="7" height="7" viewBox="0 0 7 7"><rect x="0.4" y="0.4" width="6.2" height="6.2" fill="#fff" stroke="#d0d0d4" stroke-width="0.6"/><path d="M1.6 3.6 L2.9 4.9 L5.4 1.8" fill="none" stroke="#555" stroke-width="0.8"/></svg>
<div class="a" style="left:346.6px;top:354.65px;width:666.4px;height:11.25px;background:#ffffff;border-bottom:0.6px solid #f1f1f4"></div>
<div class="t" style="left:349.00px;top:355.97px;font-size:6.3px;color:#50505a;font-weight:normal;-webkit-text-stroke:0.02px #50505a;;transform:scaleX(0.9);transform-origin:0 0">Aluminium - 4.0mm</div>
<svg class="a" style="left:714.8px;top:357.75px" width="12.2" height="5.6" viewBox="0 0 12.2 5.6"><rect x="0.4" y="0.4" width="11.4" height="4.8" fill="#788ca5" stroke="#3c4a5c" stroke-width="0.7"/></svg>
<div class="t" style="left:729.50px;top:355.97px;font-size:6.3px;color:#555560;font-weight:normal;-webkit-text-stroke:0.02px #555560;;transform:scaleX(0.9);transform-origin:0 0">120, 140, 165</div>
<svg class="a" style="left:778.3px;top:357.75px" width="12.2" height="5.6" viewBox="0 0 12.2 5.6"><rect x="0.4" y="0.4" width="11.4" height="4.8" fill="#aaafb4" stroke="#55585c" stroke-width="0.7"/></svg>
<div class="t" style="left:793.00px;top:355.97px;font-size:6.3px;color:#555560;font-weight:normal;-webkit-text-stroke:0.02px #555560;;transform:scaleX(0.9);transform-origin:0 0">170, 175, 180</div>
<svg class="a" style="left:921.8px;top:357.04999999999995px" width="7" height="7" viewBox="0 0 7 7"><rect x="0.4" y="0.4" width="6.2" height="6.2" fill="#fff" stroke="#d0d0d4" stroke-width="0.6"/><path d="M1.6 3.6 L2.9 4.9 L5.4 1.8" fill="none" stroke="#555" stroke-width="0.8"/></svg>
<div class="a" style="left:346.6px;top:365.9px;width:666.4px;height:11.25px;background:#ffffff;border-bottom:0.6px solid #f1f1f4"></div>
<div class="t" style="left:349.00px;top:367.22px;font-size:6.3px;color:#50505a;font-weight:normal;-webkit-text-stroke:0.02px #50505a;;transform:scaleX(0.9);transform-origin:0 0">Aluminium - 5.0mm</div>
<svg class="a" style="left:714.8px;top:369.0px" width="12.2" height="5.6" viewBox="0 0 12.2 5.6"><rect x="0.4" y="0.4" width="11.4" height="4.8" fill="#788ca5" stroke="#3c4a5c" stroke-width="0.7"/></svg>
<div class="t" style="left:729.50px;top:367.22px;font-size:6.3px;color:#555560;font-weight:normal;-webkit-text-stroke:0.02px #555560;;transform:scaleX(0.9);transform-origin:0 0">120, 140, 165</div>
<svg class="a" style="left:778.3px;top:369.0px" width="12.2" height="5.6" viewBox="0 0 12.2 5.6"><rect x="0.4" y="0.4" width="11.4" height="4.8" fill="#aaafb4" stroke="#55585c" stroke-width="0.7"/></svg>
<div class="t" style="left:793.00px;top:367.22px;font-size:6.3px;color:#555560;font-weight:normal;-webkit-text-stroke:0.02px #555560;;transform:scaleX(0.9);transform-origin:0 0">170, 175, 180</div>
<svg class="a" style="left:921.8px;top:368.29999999999995px" width="7" height="7" viewBox="0 0 7 7"><rect x="0.4" y="0.4" width="6.2" height="6.2" fill="#fff" stroke="#d0d0d4" stroke-width="0.6"/><path d="M1.6 3.6 L2.9 4.9 L5.4 1.8" fill="none" stroke="#555" stroke-width="0.8"/></svg>
<div class="a" style="left:346.6px;top:377.15px;width:666.4px;height:11.25px;background:#ffffff;border-bottom:0.6px solid #f1f1f4"></div>
<div class="t" style="left:349.00px;top:378.47px;font-size:6.3px;color:#50505a;font-weight:normal;-webkit-text-stroke:0.02px #50505a;;transform:scaleX(0.9);transform-origin:0 0">Aluminium vorbeschichtet grün hinten</div>
<svg class="a" style="left:714.8px;top:380.25px" width="12.2" height="5.6" viewBox="0 0 12.2 5.6"><rect x="0.4" y="0.4" width="11.4" height="4.8" fill="#788ca5" stroke="#3c4a5c" stroke-width="0.7"/></svg>
<div class="t" style="left:729.50px;top:378.47px;font-size:6.3px;color:#555560;font-weight:normal;-webkit-text-stroke:0.02px #555560;;transform:scaleX(0.9);transform-origin:0 0">120, 140, 165</div>
<svg class="a" style="left:778.3px;top:380.25px" width="12.2" height="5.6" viewBox="0 0 12.2 5.6"><rect x="0.4" y="0.4" width="11.4" height="4.8" fill="#aaafb4" stroke="#55585c" stroke-width="0.7"/></svg>
<div class="t" style="left:793.00px;top:378.47px;font-size:6.3px;color:#555560;font-weight:normal;-webkit-text-stroke:0.02px #555560;;transform:scaleX(0.9);transform-origin:0 0">170, 175, 180</div>
<svg class="a" style="left:921.8px;top:379.54999999999995px" width="7" height="7" viewBox="0 0 7 7"><rect x="0.4" y="0.4" width="6.2" height="6.2" fill="#fff" stroke="#d0d0d4" stroke-width="0.6"/><path d="M1.6 3.6 L2.9 4.9 L5.4 1.8" fill="none" stroke="#555" stroke-width="0.8"/></svg>
<div class="a" style="left:346.6px;top:388.4px;width:666.4px;height:11.25px;background:#ffffff;border-bottom:0.6px solid #f1f1f4"></div>
<div class="t" style="left:349.00px;top:389.72px;font-size:6.3px;color:#50505a;font-weight:normal;-webkit-text-stroke:0.02px #50505a;;transform:scaleX(0.9);transform-origin:0 0">Aluminium vorbeschichtet RAL 1012</div>
<svg class="a" style="left:714.8px;top:391.5px" width="12.2" height="5.6" viewBox="0 0 12.2 5.6"><rect x="0.4" y="0.4" width="11.4" height="4.8" fill="#788ca5" stroke="#3c4a5c" stroke-width="0.7"/></svg>
<div class="t" style="left:729.50px;top:389.72px;font-size:6.3px;color:#555560;font-weight:normal;-webkit-text-stroke:0.02px #555560;;transform:scaleX(0.9);transform-origin:0 0">120, 140, 165</div>
<svg class="a" style="left:778.3px;top:391.5px" width="12.2" height="5.6" viewBox="0 0 12.2 5.6"><rect x="0.4" y="0.4" width="11.4" height="4.8" fill="#aaafb4" stroke="#55585c" stroke-width="0.7"/></svg>
<div class="t" style="left:793.00px;top:389.72px;font-size:6.3px;color:#555560;font-weight:normal;-webkit-text-stroke:0.02px #555560;;transform:scaleX(0.9);transform-origin:0 0">170, 175, 180</div>
<svg class="a" style="left:921.8px;top:390.79999999999995px" width="7" height="7" viewBox="0 0 7 7"><rect x="0.4" y="0.4" width="6.2" height="6.2" fill="#fff" stroke="#d0d0d4" stroke-width="0.6"/><path d="M1.6 3.6 L2.9 4.9 L5.4 1.8" fill="none" stroke="#555" stroke-width="0.8"/></svg>
<div class="a" style="left:0px;top:603.7px;width:1024px;height:15px;background:#236aab"></div>
<div class="t" style="left:3.20px;top:607.12px;font-size:6.3px;color:#dce8f4;font-weight:normal;-webkit-text-stroke:0.02px #dce8f4;;transform:scaleX(0.93);transform-origin:0 0">Benutzer: bendex</div>
<div class="a" style="left:0px;top:618.7px;width:1024px;height:1.3px;background:#1c1c1c"></div>
<div class="a" style="left:340px;top:618.7px;width:25px;height:1.3px;background:#555"></div>
</body></html>
